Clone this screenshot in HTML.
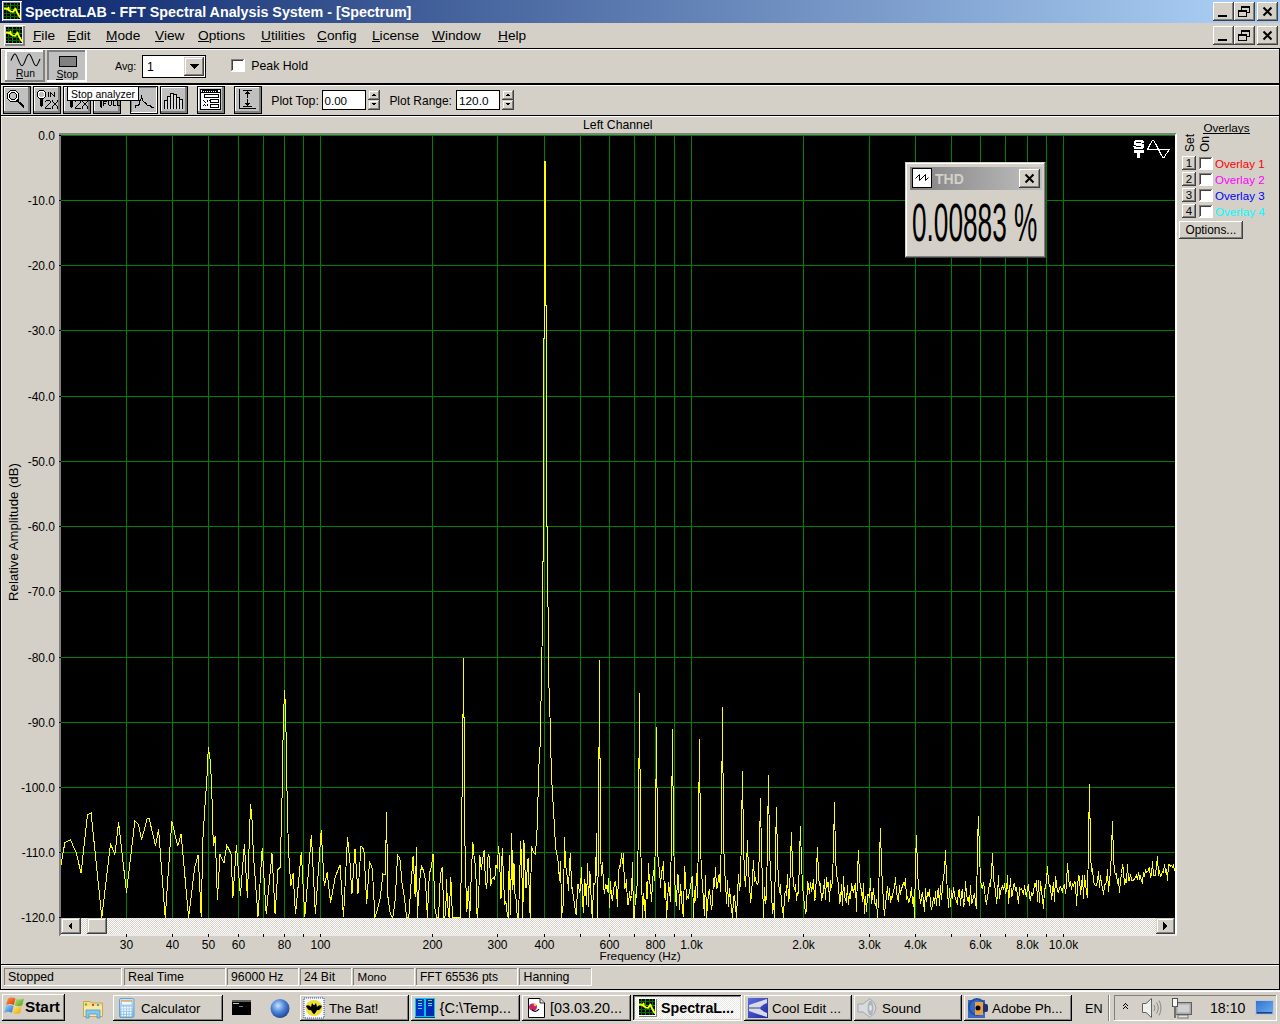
<!DOCTYPE html><html><head><meta charset="utf-8"><style>html,body{margin:0;padding:0;width:1280px;height:1024px;overflow:hidden;background:#D4D0C8}</style></head><body><svg width="1280" height="1024" viewBox="0 0 1280 1024" style="display:block">
<defs><linearGradient id="cap" gradientUnits="userSpaceOnUse" x1="0" x2="1212" y1="0" y2="0"><stop offset="0" stop-color="#0A246A"/><stop offset="1" stop-color="#A6CAF0"/></linearGradient><linearGradient id="icap" x1="0" x2="1" y1="0" y2="0"><stop offset="0" stop-color="#808080"/><stop offset="1" stop-color="#C0C0C0"/></linearGradient><pattern id="dither" width="2" height="2" patternUnits="userSpaceOnUse"><rect width="2" height="2" fill="#D4D0C8"/><rect width="1" height="1" fill="#FFFFFF"/><rect x="1" y="1" width="1" height="1" fill="#FFFFFF"/></pattern><pattern id="dither2" width="2" height="2" patternUnits="userSpaceOnUse"><rect width="2" height="2" fill="#FFFFFF"/><rect width="1" height="1" fill="#EAE8E3"/><rect x="1" y="1" width="1" height="1" fill="#EAE8E3"/></pattern></defs>
<clipPath id="plotclip"><rect x="61" y="135" width="1114" height="783"/></clipPath>
<g shape-rendering="crispEdges">
<rect x="0" y="0" width="1280" height="1024" fill="#D4D0C8" />
<rect x="0" y="0" width="1280" height="23" fill="url(#cap)" />
<rect x="2" y="1" width="20" height="20" fill="#FFFFFF" />
<rect x="3" y="2" width="19" height="19" fill="#808080" />
<rect x="3" y="2" width="18" height="18" fill="#FFFFFF" />
<rect x="3" y="2" width="17" height="17" fill="#808080" />
<rect x="4" y="3" width="16" height="16" fill="#000" />
<rect x="6" y="3" width="1" height="16" fill="#006A00" />
<rect x="4" y="5" width="16" height="1" fill="#006A00" />
<rect x="10" y="3" width="1" height="16" fill="#00A000" />
<rect x="4" y="9" width="16" height="1" fill="#00A000" />
<rect x="14" y="3" width="1" height="16" fill="#006A00" />
<rect x="4" y="13" width="16" height="1" fill="#006A00" />
<rect x="17" y="3" width="1" height="16" fill="#006A00" />
<rect x="4" y="16" width="16" height="1" fill="#006A00" />
<polyline points="4,8.5 6,8.5 7.5,9.5 8.5,7.5 9,10.5 11,11.5 13,12 15.5,8.5 16.5,11.5 18,14 20,17.5" fill="none" stroke="#FFFF00" stroke-width="1.8" stroke-linejoin="round" shape-rendering="auto"/>
<text x="25.0" y="17" font-family="Liberation Sans" font-size="14.3" font-weight="bold" fill="#FFFFFF" text-anchor="start" >SpectraLAB - FFT Spectral Analysis System - [Spectrum]</text>
<rect x="1213" y="2" width="21" height="19" fill="#D4D0C8" />
<rect x="1213" y="2" width="21" height="1" fill="#FFFFFF" />
<rect x="1213" y="2" width="1" height="19" fill="#FFFFFF" />
<rect x="1213" y="20" width="21" height="1" fill="#404040" />
<rect x="1233" y="2" width="1" height="19" fill="#404040" />
<rect x="1214" y="3" width="19" height="1" fill="#D4D0C8" />
<rect x="1214" y="3" width="1" height="17" fill="#D4D0C8" />
<rect x="1214" y="19" width="19" height="1" fill="#808080" />
<rect x="1232" y="3" width="1" height="17" fill="#808080" />
<rect x="1218" y="15" width="9" height="2" fill="#000" />
<rect x="1234" y="2" width="21" height="19" fill="#D4D0C8" />
<rect x="1234" y="2" width="21" height="1" fill="#FFFFFF" />
<rect x="1234" y="2" width="1" height="19" fill="#FFFFFF" />
<rect x="1234" y="20" width="21" height="1" fill="#404040" />
<rect x="1254" y="2" width="1" height="19" fill="#404040" />
<rect x="1235" y="3" width="19" height="1" fill="#D4D0C8" />
<rect x="1235" y="3" width="1" height="17" fill="#D4D0C8" />
<rect x="1235" y="19" width="19" height="1" fill="#808080" />
<rect x="1253" y="3" width="1" height="17" fill="#808080" />
<rect x="1241" y="6" width="9" height="2" fill="#000" />
<rect x="1241" y="6" width="1" height="4" fill="#000" />
<rect x="1249" y="6" width="1" height="7" fill="#000" />
<rect x="1246" y="12" width="4" height="1" fill="#000" />
<rect x="1238" y="10" width="9" height="2" fill="#000" />
<rect x="1238" y="10" width="1" height="7" fill="#000" />
<rect x="1246" y="10" width="1" height="7" fill="#000" />
<rect x="1238" y="16" width="9" height="1" fill="#000" />
<rect x="1257" y="2" width="21" height="19" fill="#D4D0C8" />
<rect x="1257" y="2" width="21" height="1" fill="#FFFFFF" />
<rect x="1257" y="2" width="1" height="19" fill="#FFFFFF" />
<rect x="1257" y="20" width="21" height="1" fill="#404040" />
<rect x="1277" y="2" width="1" height="19" fill="#404040" />
<rect x="1258" y="3" width="19" height="1" fill="#D4D0C8" />
<rect x="1258" y="3" width="1" height="17" fill="#D4D0C8" />
<rect x="1258" y="19" width="19" height="1" fill="#808080" />
<rect x="1276" y="3" width="1" height="17" fill="#808080" />
<path d="M1263.5 7.5 L1271.5 15.5 M1271.5 7.5 L1263.5 15.5" stroke="#000" stroke-width="2" fill="none" shape-rendering="auto"/>
<rect x="4" y="25" width="21" height="21" fill="#FFFFFF" />
<rect x="5" y="26" width="20" height="20" fill="#808080" />
<rect x="5" y="26" width="18" height="18" fill="#E8E8E8" />
<rect x="5" y="26" width="17" height="17" fill="#D4D0C8" />
<rect x="6" y="27" width="16" height="16" fill="#000" />
<rect x="8" y="27" width="1" height="16" fill="#006A00" />
<rect x="6" y="29" width="16" height="1" fill="#006A00" />
<rect x="12" y="27" width="1" height="16" fill="#00A000" />
<rect x="6" y="33" width="16" height="1" fill="#00A000" />
<rect x="16" y="27" width="1" height="16" fill="#006A00" />
<rect x="6" y="37" width="16" height="1" fill="#006A00" />
<rect x="19" y="27" width="1" height="16" fill="#006A00" />
<rect x="6" y="40" width="16" height="1" fill="#006A00" />
<polyline points="6,32.5 8,32.5 9.5,33.5 10.5,31.5 11,34.5 13,35.5 15,36 17.5,32.5 18.5,35.5 20,38 22,41.5" fill="none" stroke="#FFFF00" stroke-width="1.8" stroke-linejoin="round" shape-rendering="auto"/>
<text x="33" y="40" font-family="Liberation Sans" font-size="13.7" font-weight="normal" fill="#000" text-anchor="start" >File</text>
<rect x="33" y="41" width="8" height="1" fill="#000" />
<text x="67" y="40" font-family="Liberation Sans" font-size="13.7" font-weight="normal" fill="#000" text-anchor="start" >Edit</text>
<rect x="67" y="41" width="9" height="1" fill="#000" />
<text x="106" y="40" font-family="Liberation Sans" font-size="13.7" font-weight="normal" fill="#000" text-anchor="start" >Mode</text>
<rect x="106" y="41" width="11" height="1" fill="#000" />
<text x="155" y="40" font-family="Liberation Sans" font-size="13.7" font-weight="normal" fill="#000" text-anchor="start" >View</text>
<rect x="155" y="41" width="9" height="1" fill="#000" />
<text x="198" y="40" font-family="Liberation Sans" font-size="13.7" font-weight="normal" fill="#000" text-anchor="start" >Options</text>
<rect x="198" y="41" width="11" height="1" fill="#000" />
<text x="261" y="40" font-family="Liberation Sans" font-size="13.7" font-weight="normal" fill="#000" text-anchor="start" >Utilities</text>
<rect x="261" y="41" width="10" height="1" fill="#000" />
<text x="317" y="40" font-family="Liberation Sans" font-size="13.7" font-weight="normal" fill="#000" text-anchor="start" >Config</text>
<rect x="317" y="41" width="10" height="1" fill="#000" />
<text x="372" y="40" font-family="Liberation Sans" font-size="13.7" font-weight="normal" fill="#000" text-anchor="start" >License</text>
<rect x="372" y="41" width="8" height="1" fill="#000" />
<text x="432" y="40" font-family="Liberation Sans" font-size="13.7" font-weight="normal" fill="#000" text-anchor="start" >Window</text>
<rect x="432" y="41" width="13" height="1" fill="#000" />
<text x="498" y="40" font-family="Liberation Sans" font-size="13.7" font-weight="normal" fill="#000" text-anchor="start" >Help</text>
<rect x="498" y="41" width="10" height="1" fill="#000" />
<rect x="1213" y="26" width="21" height="19" fill="#D4D0C8" />
<rect x="1213" y="26" width="21" height="1" fill="#FFFFFF" />
<rect x="1213" y="26" width="1" height="19" fill="#FFFFFF" />
<rect x="1213" y="44" width="21" height="1" fill="#404040" />
<rect x="1233" y="26" width="1" height="19" fill="#404040" />
<rect x="1214" y="27" width="19" height="1" fill="#D4D0C8" />
<rect x="1214" y="27" width="1" height="17" fill="#D4D0C8" />
<rect x="1214" y="43" width="19" height="1" fill="#808080" />
<rect x="1232" y="27" width="1" height="17" fill="#808080" />
<rect x="1218" y="39" width="9" height="2" fill="#000" />
<rect x="1234" y="26" width="21" height="19" fill="#D4D0C8" />
<rect x="1234" y="26" width="21" height="1" fill="#FFFFFF" />
<rect x="1234" y="26" width="1" height="19" fill="#FFFFFF" />
<rect x="1234" y="44" width="21" height="1" fill="#404040" />
<rect x="1254" y="26" width="1" height="19" fill="#404040" />
<rect x="1235" y="27" width="19" height="1" fill="#D4D0C8" />
<rect x="1235" y="27" width="1" height="17" fill="#D4D0C8" />
<rect x="1235" y="43" width="19" height="1" fill="#808080" />
<rect x="1253" y="27" width="1" height="17" fill="#808080" />
<rect x="1241" y="30" width="9" height="2" fill="#000" />
<rect x="1241" y="30" width="1" height="4" fill="#000" />
<rect x="1249" y="30" width="1" height="7" fill="#000" />
<rect x="1246" y="36" width="4" height="1" fill="#000" />
<rect x="1238" y="34" width="9" height="2" fill="#000" />
<rect x="1238" y="34" width="1" height="7" fill="#000" />
<rect x="1246" y="34" width="1" height="7" fill="#000" />
<rect x="1238" y="40" width="9" height="1" fill="#000" />
<rect x="1257" y="26" width="21" height="19" fill="#D4D0C8" />
<rect x="1257" y="26" width="21" height="1" fill="#FFFFFF" />
<rect x="1257" y="26" width="1" height="19" fill="#FFFFFF" />
<rect x="1257" y="44" width="21" height="1" fill="#404040" />
<rect x="1277" y="26" width="1" height="19" fill="#404040" />
<rect x="1258" y="27" width="19" height="1" fill="#D4D0C8" />
<rect x="1258" y="27" width="1" height="17" fill="#D4D0C8" />
<rect x="1258" y="43" width="19" height="1" fill="#808080" />
<rect x="1276" y="27" width="1" height="17" fill="#808080" />
<path d="M1263.5 31.5 L1271.5 39.5 M1271.5 31.5 L1263.5 39.5" stroke="#000" stroke-width="2" fill="none" shape-rendering="auto"/>
<rect x="0" y="48" width="1" height="942" fill="#000" />
<rect x="1" y="49" width="1" height="940" fill="#EEEBE6" />
<rect x="1279" y="48" width="1" height="942" fill="#000" />
<rect x="0" y="48" width="1280" height="1" fill="#000" />
<rect x="1" y="49" width="1278" height="1" fill="#FFFFFF" />
<rect x="0" y="83" width="1280" height="1" fill="#000" />
<rect x="0" y="84" width="1280" height="1" fill="#000" />
<rect x="1" y="85" width="1278" height="1" fill="#FFFFFF" />
<rect x="0" y="115" width="1280" height="1" fill="#000" />
<rect x="1" y="116" width="1278" height="1" fill="#FFFFFF" />
<rect x="0" y="964" width="1280" height="1" fill="#000" />
<rect x="1" y="965" width="1278" height="1" fill="#FFFFFF" />
<rect x="0" y="989" width="1280" height="1" fill="#000" />
<rect x="5" y="50" width="40" height="32" fill="#C0C0C0" />
<rect x="5" y="50" width="40" height="2" fill="#FFFFFF" />
<rect x="5" y="50" width="2" height="32" fill="#FFFFFF" />
<rect x="5" y="80" width="40" height="2" fill="#808080" />
<rect x="43" y="50" width="2" height="32" fill="#808080" />
<path d="M11 60.5 C12.5 57 13.5 54 15 54 C17 54 19.5 65.8 22 65.8 C24.5 65.8 26.5 54 29 54 C31.5 54 33.5 65.8 36 65.8 C37.5 65.8 39 61 40 59" fill="none" stroke="#000" stroke-width="1.1" shape-rendering="auto"/>
<text x="16.0" y="77" font-family="Liberation Sans" font-size="10.35" font-weight="normal" fill="#000" text-anchor="start" >Run</text>
<rect x="16" y="78" width="7" height="1" fill="#000" />
<rect x="47" y="50" width="40" height="32" fill="#C0C0C0" />
<rect x="47" y="50" width="40" height="2" fill="#808080" />
<rect x="47" y="50" width="2" height="32" fill="#808080" />
<rect x="47" y="80" width="40" height="2" fill="#FFFFFF" />
<rect x="85" y="50" width="2" height="32" fill="#FFFFFF" />
<rect x="59" y="56" width="18" height="11" fill="#000" />
<rect x="60" y="57" width="16" height="9" fill="#808080" />
<text x="56.5" y="78" font-family="Liberation Sans" font-size="10.46" font-weight="normal" fill="#000" text-anchor="start" >Stop</text>
<rect x="56" y="79" width="7" height="1" fill="#000" />
<text x="115.0" y="70" font-family="Liberation Sans" font-size="10.78" font-weight="normal" fill="#000" text-anchor="start" >Avg:</text>
<rect x="142" y="55" width="64" height="23" fill="#000" />
<rect x="143" y="56" width="62" height="21" fill="#FFFFFF" />
<rect x="184" y="57" width="20" height="19" fill="#D4D0C8" />
<rect x="184" y="57" width="20" height="1" fill="#D4D0C8" />
<rect x="184" y="57" width="1" height="19" fill="#D4D0C8" />
<rect x="184" y="75" width="20" height="1" fill="#404040" />
<rect x="203" y="57" width="1" height="19" fill="#404040" />
<rect x="185" y="58" width="18" height="1" fill="#FFFFFF" />
<rect x="185" y="58" width="1" height="17" fill="#FFFFFF" />
<rect x="185" y="74" width="18" height="1" fill="#808080" />
<rect x="202" y="58" width="1" height="17" fill="#808080" />
<path d="M189 64 L199 64 L194 69 Z" fill="#000"/>
<text x="147" y="71" font-family="Liberation Sans" font-size="12.2" font-weight="normal" fill="#000" text-anchor="start" >1</text>
<rect x="231" y="59" width="14" height="13" fill="#FFFFFF" />
<rect x="231" y="59" width="14" height="1" fill="#808080" />
<rect x="231" y="59" width="1" height="13" fill="#808080" />
<rect x="231" y="71" width="14" height="1" fill="#FFFFFF" />
<rect x="244" y="59" width="1" height="13" fill="#FFFFFF" />
<rect x="232" y="60" width="12" height="1" fill="#404040" />
<rect x="232" y="60" width="1" height="11" fill="#404040" />
<rect x="232" y="70" width="12" height="1" fill="#FFFFFF" />
<rect x="243" y="60" width="1" height="11" fill="#FFFFFF" />
<text x="251.3" y="70" font-family="Liberation Sans" font-size="12.29" font-weight="normal" fill="#000" text-anchor="start" >Peak Hold</text>
<rect x="3" y="86" width="28" height="28" fill="#000" />
<rect x="4" y="87" width="26" height="26" fill="#C0C0C0" />
<rect x="4" y="87" width="26" height="1" fill="#FFFFFF" />
<rect x="4" y="87" width="1" height="26" fill="#FFFFFF" />
<rect x="4" y="111" width="26" height="2" fill="#808080" />
<rect x="28" y="87" width="2" height="26" fill="#808080" />
<rect x="33" y="86" width="28" height="28" fill="#000" />
<rect x="34" y="87" width="26" height="26" fill="#C0C0C0" />
<rect x="34" y="87" width="26" height="1" fill="#FFFFFF" />
<rect x="34" y="87" width="1" height="26" fill="#FFFFFF" />
<rect x="34" y="111" width="26" height="2" fill="#808080" />
<rect x="58" y="87" width="2" height="26" fill="#808080" />
<rect x="63" y="86" width="28" height="28" fill="#000" />
<rect x="64" y="87" width="26" height="26" fill="#C0C0C0" />
<rect x="64" y="87" width="26" height="1" fill="#FFFFFF" />
<rect x="64" y="87" width="1" height="26" fill="#FFFFFF" />
<rect x="64" y="111" width="26" height="2" fill="#808080" />
<rect x="88" y="87" width="2" height="26" fill="#808080" />
<rect x="93" y="86" width="28" height="28" fill="#000" />
<rect x="94" y="87" width="26" height="26" fill="#C0C0C0" />
<rect x="94" y="87" width="26" height="1" fill="#FFFFFF" />
<rect x="94" y="87" width="1" height="26" fill="#FFFFFF" />
<rect x="94" y="111" width="26" height="2" fill="#808080" />
<rect x="118" y="87" width="2" height="26" fill="#808080" />
<rect x="160" y="86" width="28" height="28" fill="#000" />
<rect x="161" y="87" width="26" height="26" fill="#C0C0C0" />
<rect x="161" y="87" width="26" height="1" fill="#FFFFFF" />
<rect x="161" y="87" width="1" height="26" fill="#FFFFFF" />
<rect x="161" y="111" width="26" height="2" fill="#808080" />
<rect x="185" y="87" width="2" height="26" fill="#808080" />
<rect x="197" y="86" width="28" height="28" fill="#000" />
<rect x="198" y="87" width="26" height="26" fill="#C0C0C0" />
<rect x="198" y="87" width="26" height="1" fill="#FFFFFF" />
<rect x="198" y="87" width="1" height="26" fill="#FFFFFF" />
<rect x="198" y="111" width="26" height="2" fill="#808080" />
<rect x="222" y="87" width="2" height="26" fill="#808080" />
<rect x="234" y="86" width="28" height="28" fill="#000" />
<rect x="235" y="87" width="26" height="26" fill="#C0C0C0" />
<rect x="235" y="87" width="26" height="1" fill="#FFFFFF" />
<rect x="235" y="87" width="1" height="26" fill="#FFFFFF" />
<rect x="235" y="111" width="26" height="2" fill="#808080" />
<rect x="259" y="87" width="2" height="26" fill="#808080" />
<rect x="130" y="86" width="28" height="28" fill="#000" />
<rect x="131" y="87" width="26" height="26" fill="#C0C0C0" />
<rect x="131" y="87" width="26" height="1" fill="#808080" />
<rect x="131" y="87" width="1" height="26" fill="#808080" />
<rect x="131" y="112" width="26" height="1" fill="#FFFFFF" />
<rect x="156" y="87" width="1" height="26" fill="#FFFFFF" />
<rect x="10" y="90" width="6" height="1" fill="#000" />
<rect x="9" y="91" width="1" height="1" fill="#000" />
<rect x="10" y="91" width="6" height="1" fill="#FFFFFF" />
<rect x="16" y="91" width="1" height="1" fill="#000" />
<rect x="8" y="92" width="1" height="1" fill="#000" />
<rect x="9" y="92" width="2" height="1" fill="#FFFFFF" />
<rect x="11" y="92" width="4" height="1" fill="#000" />
<rect x="15" y="92" width="2" height="1" fill="#FFFFFF" />
<rect x="17" y="92" width="1" height="1" fill="#000" />
<rect x="7" y="93" width="1" height="1" fill="#000" />
<rect x="8" y="93" width="2" height="1" fill="#FFFFFF" />
<rect x="10" y="93" width="1" height="1" fill="#000" />
<rect x="15" y="93" width="1" height="1" fill="#000" />
<rect x="16" y="93" width="2" height="1" fill="#FFFFFF" />
<rect x="18" y="93" width="1" height="1" fill="#000" />
<rect x="7" y="94" width="1" height="1" fill="#000" />
<rect x="8" y="94" width="1" height="1" fill="#FFFFFF" />
<rect x="9" y="94" width="1" height="1" fill="#000" />
<rect x="16" y="94" width="1" height="1" fill="#000" />
<rect x="17" y="94" width="1" height="1" fill="#FFFFFF" />
<rect x="18" y="94" width="1" height="1" fill="#000" />
<rect x="7" y="95" width="1" height="1" fill="#000" />
<rect x="8" y="95" width="1" height="1" fill="#FFFFFF" />
<rect x="9" y="95" width="1" height="1" fill="#000" />
<rect x="16" y="95" width="1" height="1" fill="#000" />
<rect x="17" y="95" width="1" height="1" fill="#FFFFFF" />
<rect x="18" y="95" width="1" height="1" fill="#000" />
<rect x="7" y="96" width="1" height="1" fill="#000" />
<rect x="8" y="96" width="1" height="1" fill="#FFFFFF" />
<rect x="9" y="96" width="1" height="1" fill="#000" />
<rect x="16" y="96" width="1" height="1" fill="#000" />
<rect x="17" y="96" width="1" height="1" fill="#FFFFFF" />
<rect x="18" y="96" width="1" height="1" fill="#000" />
<rect x="7" y="97" width="1" height="1" fill="#000" />
<rect x="8" y="97" width="1" height="1" fill="#FFFFFF" />
<rect x="9" y="97" width="1" height="1" fill="#000" />
<rect x="16" y="97" width="1" height="1" fill="#000" />
<rect x="17" y="97" width="1" height="1" fill="#FFFFFF" />
<rect x="18" y="97" width="1" height="1" fill="#000" />
<rect x="7" y="98" width="1" height="1" fill="#000" />
<rect x="8" y="98" width="2" height="1" fill="#FFFFFF" />
<rect x="10" y="98" width="1" height="1" fill="#000" />
<rect x="15" y="98" width="1" height="1" fill="#000" />
<rect x="16" y="98" width="2" height="1" fill="#FFFFFF" />
<rect x="18" y="98" width="1" height="1" fill="#000" />
<rect x="8" y="99" width="1" height="1" fill="#000" />
<rect x="9" y="99" width="2" height="1" fill="#FFFFFF" />
<rect x="11" y="99" width="4" height="1" fill="#000" />
<rect x="15" y="99" width="2" height="1" fill="#FFFFFF" />
<rect x="17" y="99" width="2" height="1" fill="#000" />
<rect x="9" y="100" width="1" height="1" fill="#000" />
<rect x="10" y="100" width="6" height="1" fill="#FFFFFF" />
<rect x="16" y="100" width="3" height="1" fill="#000" />
<rect x="10" y="101" width="9" height="1" fill="#000" />
<rect x="18" y="102" width="3" height="1" fill="#000" />
<rect x="19" y="103" width="3" height="1" fill="#000" />
<rect x="20" y="104" width="3" height="1" fill="#000" />
<rect x="21" y="105" width="3" height="1" fill="#000" />
<rect x="22" y="106" width="2" height="1" fill="#000" />
<rect x="23" y="107" width="1" height="1" fill="#000" />
<rect x="39" y="90" width="5" height="1" fill="#000" />
<rect x="38" y="91" width="1" height="1" fill="#000" />
<rect x="39" y="91" width="5" height="1" fill="#FFFFFF" />
<rect x="44" y="91" width="1" height="1" fill="#000" />
<rect x="37" y="92" width="1" height="1" fill="#000" />
<rect x="38" y="92" width="2" height="1" fill="#FFFFFF" />
<rect x="43" y="92" width="2" height="1" fill="#FFFFFF" />
<rect x="45" y="92" width="1" height="1" fill="#000" />
<rect x="37" y="93" width="1" height="1" fill="#000" />
<rect x="38" y="93" width="1" height="1" fill="#FFFFFF" />
<rect x="44" y="93" width="1" height="1" fill="#FFFFFF" />
<rect x="45" y="93" width="1" height="1" fill="#000" />
<rect x="37" y="94" width="1" height="1" fill="#000" />
<rect x="38" y="94" width="1" height="1" fill="#FFFFFF" />
<rect x="44" y="94" width="1" height="1" fill="#FFFFFF" />
<rect x="45" y="94" width="1" height="1" fill="#000" />
<rect x="37" y="95" width="1" height="1" fill="#000" />
<rect x="38" y="95" width="1" height="1" fill="#FFFFFF" />
<rect x="44" y="95" width="1" height="1" fill="#FFFFFF" />
<rect x="45" y="95" width="1" height="1" fill="#000" />
<rect x="37" y="96" width="1" height="1" fill="#000" />
<rect x="38" y="96" width="2" height="1" fill="#FFFFFF" />
<rect x="43" y="96" width="2" height="1" fill="#FFFFFF" />
<rect x="45" y="96" width="1" height="1" fill="#000" />
<rect x="38" y="97" width="1" height="1" fill="#000" />
<rect x="39" y="97" width="5" height="1" fill="#FFFFFF" />
<rect x="44" y="97" width="1" height="1" fill="#000" />
<rect x="39" y="98" width="5" height="1" fill="#000" />
<rect x="40" y="99" width="3" height="1" fill="#000" />
<rect x="40" y="100" width="3" height="1" fill="#000" />
<rect x="40" y="101" width="3" height="1" fill="#000" />
<rect x="40" y="102" width="3" height="1" fill="#000" />
<rect x="40" y="103" width="3" height="1" fill="#000" />
<rect x="40" y="104" width="3" height="1" fill="#000" />
<rect x="40" y="105" width="3" height="1" fill="#000" />
<rect x="41" y="106" width="1" height="1" fill="#000" />
<rect x="48" y="92" width="1" height="1" fill="#000" />
<rect x="50" y="92" width="1" height="1" fill="#000" />
<rect x="54" y="92" width="1" height="1" fill="#000" />
<rect x="48" y="93" width="1" height="1" fill="#000" />
<rect x="50" y="93" width="2" height="1" fill="#000" />
<rect x="54" y="93" width="1" height="1" fill="#000" />
<rect x="48" y="94" width="1" height="1" fill="#000" />
<rect x="50" y="94" width="1" height="1" fill="#000" />
<rect x="52" y="94" width="1" height="1" fill="#000" />
<rect x="54" y="94" width="1" height="1" fill="#000" />
<rect x="48" y="95" width="1" height="1" fill="#000" />
<rect x="50" y="95" width="1" height="1" fill="#000" />
<rect x="53" y="95" width="2" height="1" fill="#000" />
<rect x="48" y="96" width="1" height="1" fill="#000" />
<rect x="50" y="96" width="1" height="1" fill="#000" />
<rect x="54" y="96" width="1" height="1" fill="#000" />
<rect x="46" y="100" width="4" height="1" fill="#000" />
<rect x="52" y="100" width="1" height="1" fill="#000" />
<rect x="57" y="100" width="1" height="1" fill="#000" />
<rect x="45" y="101" width="1" height="1" fill="#000" />
<rect x="50" y="101" width="1" height="1" fill="#000" />
<rect x="52" y="101" width="1" height="1" fill="#000" />
<rect x="57" y="101" width="1" height="1" fill="#000" />
<rect x="50" y="102" width="1" height="1" fill="#000" />
<rect x="53" y="102" width="1" height="1" fill="#000" />
<rect x="56" y="102" width="1" height="1" fill="#000" />
<rect x="49" y="103" width="1" height="1" fill="#000" />
<rect x="54" y="103" width="2" height="1" fill="#000" />
<rect x="48" y="104" width="1" height="1" fill="#000" />
<rect x="54" y="104" width="2" height="1" fill="#000" />
<rect x="47" y="105" width="1" height="1" fill="#000" />
<rect x="53" y="105" width="1" height="1" fill="#000" />
<rect x="56" y="105" width="1" height="1" fill="#000" />
<rect x="46" y="106" width="1" height="1" fill="#000" />
<rect x="52" y="106" width="1" height="1" fill="#000" />
<rect x="57" y="106" width="1" height="1" fill="#000" />
<rect x="45" y="107" width="1" height="1" fill="#000" />
<rect x="52" y="107" width="1" height="1" fill="#000" />
<rect x="57" y="107" width="1" height="1" fill="#000" />
<rect x="45" y="108" width="6" height="1" fill="#000" />
<rect x="52" y="108" width="1" height="1" fill="#000" />
<rect x="57" y="108" width="1" height="1" fill="#000" />
<rect x="70" y="100" width="3" height="1" fill="#000" />
<rect x="70" y="101" width="3" height="1" fill="#000" />
<rect x="70" y="102" width="3" height="1" fill="#000" />
<rect x="70" y="103" width="3" height="1" fill="#000" />
<rect x="70" y="104" width="3" height="1" fill="#000" />
<rect x="70" y="105" width="3" height="1" fill="#000" />
<rect x="70" y="106" width="3" height="1" fill="#000" />
<rect x="71" y="107" width="1" height="1" fill="#000" />
<rect x="76" y="100" width="4" height="1" fill="#000" />
<rect x="82" y="100" width="1" height="1" fill="#000" />
<rect x="87" y="100" width="1" height="1" fill="#000" />
<rect x="75" y="101" width="1" height="1" fill="#000" />
<rect x="80" y="101" width="1" height="1" fill="#000" />
<rect x="82" y="101" width="1" height="1" fill="#000" />
<rect x="87" y="101" width="1" height="1" fill="#000" />
<rect x="80" y="102" width="1" height="1" fill="#000" />
<rect x="83" y="102" width="1" height="1" fill="#000" />
<rect x="86" y="102" width="1" height="1" fill="#000" />
<rect x="79" y="103" width="1" height="1" fill="#000" />
<rect x="84" y="103" width="2" height="1" fill="#000" />
<rect x="78" y="104" width="1" height="1" fill="#000" />
<rect x="84" y="104" width="2" height="1" fill="#000" />
<rect x="77" y="105" width="1" height="1" fill="#000" />
<rect x="83" y="105" width="1" height="1" fill="#000" />
<rect x="86" y="105" width="1" height="1" fill="#000" />
<rect x="76" y="106" width="1" height="1" fill="#000" />
<rect x="82" y="106" width="1" height="1" fill="#000" />
<rect x="87" y="106" width="1" height="1" fill="#000" />
<rect x="75" y="107" width="1" height="1" fill="#000" />
<rect x="82" y="107" width="1" height="1" fill="#000" />
<rect x="87" y="107" width="1" height="1" fill="#000" />
<rect x="75" y="108" width="6" height="1" fill="#000" />
<rect x="82" y="108" width="1" height="1" fill="#000" />
<rect x="87" y="108" width="1" height="1" fill="#000" />
<rect x="101" y="100" width="2" height="1" fill="#000" />
<rect x="100" y="101" width="2" height="1" fill="#000" />
<rect x="100" y="102" width="2" height="1" fill="#000" />
<rect x="100" y="103" width="2" height="1" fill="#000" />
<rect x="100" y="104" width="2" height="1" fill="#000" />
<rect x="100" y="105" width="2" height="1" fill="#000" />
<rect x="100" y="106" width="2" height="1" fill="#000" />
<rect x="101" y="107" width="1" height="1" fill="#000" />
<rect x="103" y="101" width="4" height="1" fill="#000" />
<rect x="108" y="101" width="1" height="1" fill="#000" />
<rect x="111" y="101" width="1" height="1" fill="#000" />
<rect x="113" y="101" width="1" height="1" fill="#000" />
<rect x="117" y="101" width="1" height="1" fill="#000" />
<rect x="103" y="102" width="1" height="1" fill="#000" />
<rect x="108" y="102" width="1" height="1" fill="#000" />
<rect x="111" y="102" width="1" height="1" fill="#000" />
<rect x="113" y="102" width="1" height="1" fill="#000" />
<rect x="117" y="102" width="1" height="1" fill="#000" />
<rect x="103" y="103" width="3" height="1" fill="#000" />
<rect x="108" y="103" width="1" height="1" fill="#000" />
<rect x="111" y="103" width="1" height="1" fill="#000" />
<rect x="113" y="103" width="1" height="1" fill="#000" />
<rect x="117" y="103" width="1" height="1" fill="#000" />
<rect x="103" y="104" width="1" height="1" fill="#000" />
<rect x="108" y="104" width="1" height="1" fill="#000" />
<rect x="111" y="104" width="1" height="1" fill="#000" />
<rect x="113" y="104" width="1" height="1" fill="#000" />
<rect x="117" y="104" width="1" height="1" fill="#000" />
<rect x="103" y="105" width="1" height="1" fill="#000" />
<rect x="109" y="105" width="2" height="1" fill="#000" />
<rect x="113" y="105" width="3" height="1" fill="#000" />
<rect x="117" y="105" width="3" height="1" fill="#000" />
<polyline points="135.5,107.5 135.5,105.5 138.5,105.5 139.5,103.5 139.5,101.5 140.5,99.5 141.5,98.5 141.5,94.5 141.5,98.5 142.5,98.5 142.5,100.5 144.5,102.5 145.5,102.5 146.5,104.5 147.5,105.5 150.5,105.5 151.5,107.5 153.5,107.5" fill="none" stroke="#000" stroke-width="1"/>
<rect x="164" y="100" width="4" height="1" fill="#000" />
<rect x="167" y="96" width="4" height="1" fill="#000" />
<rect x="170" y="93" width="4" height="1" fill="#000" />
<rect x="173" y="94" width="4" height="1" fill="#000" />
<rect x="176" y="97" width="4" height="1" fill="#000" />
<rect x="179" y="99" width="4" height="1" fill="#000" />
<rect x="164" y="100" width="1" height="9" fill="#000" />
<rect x="167" y="96" width="1" height="13" fill="#000" />
<rect x="170" y="93" width="1" height="16" fill="#000" />
<rect x="173" y="93" width="1" height="16" fill="#000" />
<rect x="176" y="94" width="1" height="15" fill="#000" />
<rect x="179" y="97" width="1" height="12" fill="#000" />
<rect x="182" y="99" width="1" height="10" fill="#000" />
<rect x="165" y="101" width="2" height="8" fill="#D8D8D8" />
<rect x="168" y="97" width="2" height="12" fill="#D8D8D8" />
<rect x="171" y="94" width="2" height="15" fill="#D8D8D8" />
<rect x="174" y="95" width="2" height="14" fill="#D8D8D8" />
<rect x="177" y="98" width="2" height="11" fill="#D8D8D8" />
<rect x="180" y="100" width="2" height="9" fill="#D8D8D8" />
<rect x="200" y="89" width="21" height="21" fill="#000" />
<rect x="201" y="93" width="19" height="16" fill="#FFFFFF" />
<rect x="203" y="91" width="1" height="1" fill="#FFFFFF" />
<rect x="205" y="91" width="1" height="1" fill="#FFFFFF" />
<rect x="207" y="91" width="1" height="1" fill="#FFFFFF" />
<rect x="209" y="91" width="1" height="1" fill="#FFFFFF" />
<rect x="211" y="91" width="1" height="1" fill="#FFFFFF" />
<rect x="213" y="91" width="1" height="1" fill="#FFFFFF" />
<rect x="215" y="91" width="1" height="1" fill="#FFFFFF" />
<rect x="218" y="90" width="2" height="2" fill="#FFFFFF" />
<rect x="201" y="90" width="1" height="2" fill="#FFFFFF" />
<rect x="204" y="94" width="15" height="4" fill="#000" />
<rect x="205" y="95" width="13" height="2" fill="#FFFFFF" />
<rect x="210" y="99" width="9" height="4" fill="#000" />
<rect x="211" y="100" width="7" height="2" fill="#FFFFFF" />
<rect x="210" y="104" width="9" height="4" fill="#000" />
<rect x="211" y="105" width="7" height="2" fill="#FFFFFF" />
<rect x="203" y="100" width="1" height="1" fill="#000" />
<rect x="207" y="100" width="1" height="1" fill="#000" />
<rect x="209" y="100" width="1" height="1" fill="#000" />
<rect x="204" y="101" width="1" height="1" fill="#000" />
<rect x="207" y="101" width="1" height="1" fill="#000" />
<rect x="205" y="102" width="1" height="1" fill="#000" />
<rect x="204" y="104" width="1" height="1" fill="#000" />
<rect x="207" y="104" width="1" height="1" fill="#000" />
<rect x="203" y="105" width="1" height="1" fill="#000" />
<rect x="205" y="105" width="1" height="1" fill="#000" />
<rect x="207" y="105" width="1" height="1" fill="#000" />
<rect x="239" y="89" width="1" height="20" fill="#000" />
<rect x="239" y="108" width="17" height="1" fill="#000" />
<rect x="243" y="90" width="9" height="1" fill="#000" />
<rect x="243" y="106" width="9" height="1" fill="#000" />
<rect x="247" y="91" width="1" height="7" fill="#000" />
<rect x="247" y="99" width="1" height="7" fill="#000" />
<rect x="246" y="92" width="3" height="1" fill="#000" />
<rect x="245" y="93" width="5" height="1" fill="#000" />
<rect x="245" y="103" width="5" height="1" fill="#000" />
<rect x="246" y="104" width="3" height="1" fill="#000" />
<text x="271.2" y="105" font-family="Liberation Sans" font-size="12.31" font-weight="normal" fill="#000" text-anchor="start" >Plot Top:</text>
<rect x="322" y="90" width="44" height="20" fill="#000" />
<rect x="323" y="91" width="42" height="18" fill="#FFFFFF" />
<text x="324.5" y="105" font-family="Liberation Sans" font-size="11.57" font-weight="normal" fill="#000" text-anchor="start" >0.00</text>
<rect x="368" y="90" width="12" height="10" fill="#D4D0C8" />
<rect x="368" y="90" width="12" height="1" fill="#D4D0C8" />
<rect x="368" y="90" width="1" height="10" fill="#D4D0C8" />
<rect x="368" y="99" width="12" height="1" fill="#404040" />
<rect x="379" y="90" width="1" height="10" fill="#404040" />
<rect x="369" y="91" width="10" height="1" fill="#FFFFFF" />
<rect x="369" y="91" width="1" height="8" fill="#FFFFFF" />
<rect x="369" y="98" width="10" height="1" fill="#808080" />
<rect x="378" y="91" width="1" height="8" fill="#808080" />
<rect x="368" y="100" width="12" height="10" fill="#D4D0C8" />
<rect x="368" y="100" width="12" height="1" fill="#D4D0C8" />
<rect x="368" y="100" width="1" height="10" fill="#D4D0C8" />
<rect x="368" y="109" width="12" height="1" fill="#404040" />
<rect x="379" y="100" width="1" height="10" fill="#404040" />
<rect x="369" y="101" width="10" height="1" fill="#FFFFFF" />
<rect x="369" y="101" width="1" height="8" fill="#FFFFFF" />
<rect x="369" y="108" width="10" height="1" fill="#808080" />
<rect x="378" y="101" width="1" height="8" fill="#808080" />
<path d="M372 96 L376 96 L374 93 Z" fill="#000"/>
<path d="M372 103 L376 103 L374 106 Z" fill="#000"/>
<text x="389.4" y="105" font-family="Liberation Sans" font-size="11.98" font-weight="normal" fill="#000" text-anchor="start" >Plot Range:</text>
<rect x="456" y="90" width="44" height="20" fill="#000" />
<rect x="457" y="91" width="42" height="18" fill="#FFFFFF" />
<text x="459.0" y="105" font-family="Liberation Sans" font-size="11.78" font-weight="normal" fill="#000" text-anchor="start" >120.0</text>
<rect x="502" y="90" width="12" height="10" fill="#D4D0C8" />
<rect x="502" y="90" width="12" height="1" fill="#D4D0C8" />
<rect x="502" y="90" width="1" height="10" fill="#D4D0C8" />
<rect x="502" y="99" width="12" height="1" fill="#404040" />
<rect x="513" y="90" width="1" height="10" fill="#404040" />
<rect x="503" y="91" width="10" height="1" fill="#FFFFFF" />
<rect x="503" y="91" width="1" height="8" fill="#FFFFFF" />
<rect x="503" y="98" width="10" height="1" fill="#808080" />
<rect x="512" y="91" width="1" height="8" fill="#808080" />
<rect x="502" y="100" width="12" height="10" fill="#D4D0C8" />
<rect x="502" y="100" width="12" height="1" fill="#D4D0C8" />
<rect x="502" y="100" width="1" height="10" fill="#D4D0C8" />
<rect x="502" y="109" width="12" height="1" fill="#404040" />
<rect x="513" y="100" width="1" height="10" fill="#404040" />
<rect x="503" y="101" width="10" height="1" fill="#FFFFFF" />
<rect x="503" y="101" width="1" height="8" fill="#FFFFFF" />
<rect x="503" y="108" width="10" height="1" fill="#808080" />
<rect x="512" y="101" width="1" height="8" fill="#808080" />
<path d="M506 96 L510 96 L508 93 Z" fill="#000"/>
<path d="M506 103 L510 103 L508 106 Z" fill="#000"/>
<rect x="59" y="133" width="1117" height="1" fill="#808080" />
<rect x="59" y="134" width="1116" height="1" fill="#808080" />
<rect x="59" y="133" width="2" height="803" fill="#808080" />
<rect x="1175" y="135" width="2" height="801" fill="#FFFFFF" />
<rect x="1176" y="134" width="1" height="1" fill="#FFFFFF" />
<rect x="61" y="934" width="1116" height="2" fill="#EAEAEA" />
<rect x="60" y="935" width="1" height="1" fill="#EAEAEA" />
<rect x="61" y="135" width="1114" height="783" fill="#000" />
<rect x="126" y="135" width="1" height="783" fill="#008000" />
<rect x="172" y="135" width="1" height="783" fill="#008000" />
<rect x="208" y="135" width="1" height="783" fill="#008000" />
<rect x="238" y="135" width="1" height="783" fill="#008000" />
<rect x="263" y="135" width="1" height="783" fill="#008000" />
<rect x="284" y="135" width="1" height="783" fill="#008000" />
<rect x="303" y="135" width="1" height="783" fill="#008000" />
<rect x="320" y="135" width="1" height="783" fill="#008000" />
<rect x="432" y="135" width="1" height="783" fill="#008000" />
<rect x="497" y="135" width="1" height="783" fill="#008000" />
<rect x="544" y="135" width="1" height="783" fill="#008000" />
<rect x="580" y="135" width="1" height="783" fill="#008000" />
<rect x="609" y="135" width="1" height="783" fill="#008000" />
<rect x="634" y="135" width="1" height="783" fill="#008000" />
<rect x="655" y="135" width="1" height="783" fill="#008000" />
<rect x="674" y="135" width="1" height="783" fill="#008000" />
<rect x="691" y="135" width="1" height="783" fill="#008000" />
<rect x="803" y="135" width="1" height="783" fill="#008000" />
<rect x="869" y="135" width="1" height="783" fill="#008000" />
<rect x="915" y="135" width="1" height="783" fill="#008000" />
<rect x="951" y="135" width="1" height="783" fill="#008000" />
<rect x="980" y="135" width="1" height="783" fill="#008000" />
<rect x="1005" y="135" width="1" height="783" fill="#008000" />
<rect x="1027" y="135" width="1" height="783" fill="#008000" />
<rect x="1046" y="135" width="1" height="783" fill="#008000" />
<rect x="1063" y="135" width="1" height="783" fill="#008000" />
<rect x="61" y="135" width="1114" height="1" fill="#008000" />
<rect x="59" y="135" width="2" height="1" fill="#000" />
<text x="55" y="140" font-family="Liberation Sans" font-size="12" font-weight="normal" fill="#000" text-anchor="end" >0.0</text>
<rect x="61" y="200" width="1114" height="1" fill="#008000" />
<rect x="59" y="200" width="2" height="1" fill="#000" />
<text x="55" y="205" font-family="Liberation Sans" font-size="12" font-weight="normal" fill="#000" text-anchor="end" >-10.0</text>
<rect x="61" y="265" width="1114" height="1" fill="#008000" />
<rect x="59" y="265" width="2" height="1" fill="#000" />
<text x="55" y="270" font-family="Liberation Sans" font-size="12" font-weight="normal" fill="#000" text-anchor="end" >-20.0</text>
<rect x="61" y="330" width="1114" height="1" fill="#008000" />
<rect x="59" y="330" width="2" height="1" fill="#000" />
<text x="55" y="335" font-family="Liberation Sans" font-size="12" font-weight="normal" fill="#000" text-anchor="end" >-30.0</text>
<rect x="61" y="396" width="1114" height="1" fill="#008000" />
<rect x="59" y="396" width="2" height="1" fill="#000" />
<text x="55" y="401" font-family="Liberation Sans" font-size="12" font-weight="normal" fill="#000" text-anchor="end" >-40.0</text>
<rect x="61" y="461" width="1114" height="1" fill="#008000" />
<rect x="59" y="461" width="2" height="1" fill="#000" />
<text x="55" y="466" font-family="Liberation Sans" font-size="12" font-weight="normal" fill="#000" text-anchor="end" >-50.0</text>
<rect x="61" y="526" width="1114" height="1" fill="#008000" />
<rect x="59" y="526" width="2" height="1" fill="#000" />
<text x="55" y="531" font-family="Liberation Sans" font-size="12" font-weight="normal" fill="#000" text-anchor="end" >-60.0</text>
<rect x="61" y="591" width="1114" height="1" fill="#008000" />
<rect x="59" y="591" width="2" height="1" fill="#000" />
<text x="55" y="596" font-family="Liberation Sans" font-size="12" font-weight="normal" fill="#000" text-anchor="end" >-70.0</text>
<rect x="61" y="657" width="1114" height="1" fill="#008000" />
<rect x="59" y="657" width="2" height="1" fill="#000" />
<text x="55" y="662" font-family="Liberation Sans" font-size="12" font-weight="normal" fill="#000" text-anchor="end" >-80.0</text>
<rect x="61" y="722" width="1114" height="1" fill="#008000" />
<rect x="59" y="722" width="2" height="1" fill="#000" />
<text x="55" y="727" font-family="Liberation Sans" font-size="12" font-weight="normal" fill="#000" text-anchor="end" >-90.0</text>
<rect x="61" y="787" width="1114" height="1" fill="#008000" />
<rect x="59" y="787" width="2" height="1" fill="#000" />
<text x="55" y="792" font-family="Liberation Sans" font-size="12" font-weight="normal" fill="#000" text-anchor="end" >-100.0</text>
<rect x="61" y="852" width="1114" height="1" fill="#008000" />
<rect x="59" y="852" width="2" height="1" fill="#000" />
<text x="55" y="857" font-family="Liberation Sans" font-size="12" font-weight="normal" fill="#000" text-anchor="end" >-110.0</text>
<rect x="59" y="917" width="2" height="1" fill="#000" />
<text x="55" y="922" font-family="Liberation Sans" font-size="12" font-weight="normal" fill="#000" text-anchor="end" >-120.0</text>
<rect x="61" y="918" width="1114" height="16" fill="url(#dither)" />
<rect x="61" y="918" width="20" height="16" fill="#D4D0C8" />
<rect x="61" y="918" width="20" height="1" fill="#D4D0C8" />
<rect x="61" y="918" width="1" height="16" fill="#D4D0C8" />
<rect x="61" y="933" width="20" height="1" fill="#404040" />
<rect x="80" y="918" width="1" height="16" fill="#404040" />
<rect x="62" y="919" width="18" height="1" fill="#FFFFFF" />
<rect x="62" y="919" width="1" height="14" fill="#FFFFFF" />
<rect x="62" y="932" width="18" height="1" fill="#808080" />
<rect x="79" y="919" width="1" height="14" fill="#808080" />
<path d="M68 926 L72 922 L72 930 Z" fill="#000"/>
<rect x="87" y="918" width="20" height="16" fill="#D4D0C8" />
<rect x="87" y="918" width="20" height="1" fill="#D4D0C8" />
<rect x="87" y="918" width="1" height="16" fill="#D4D0C8" />
<rect x="87" y="933" width="20" height="1" fill="#404040" />
<rect x="106" y="918" width="1" height="16" fill="#404040" />
<rect x="88" y="919" width="18" height="1" fill="#FFFFFF" />
<rect x="88" y="919" width="1" height="14" fill="#FFFFFF" />
<rect x="88" y="932" width="18" height="1" fill="#808080" />
<rect x="105" y="919" width="1" height="14" fill="#808080" />
<rect x="1156" y="918" width="19" height="16" fill="#D4D0C8" />
<rect x="1156" y="918" width="19" height="1" fill="#D4D0C8" />
<rect x="1156" y="918" width="1" height="16" fill="#D4D0C8" />
<rect x="1156" y="933" width="19" height="1" fill="#404040" />
<rect x="1174" y="918" width="1" height="16" fill="#404040" />
<rect x="1157" y="919" width="17" height="1" fill="#FFFFFF" />
<rect x="1157" y="919" width="1" height="14" fill="#FFFFFF" />
<rect x="1157" y="932" width="17" height="1" fill="#808080" />
<rect x="1173" y="919" width="1" height="14" fill="#808080" />
<path d="M1167 926 L1163 922 L1163 930 Z" fill="#000"/>
<rect x="126" y="934" width="1" height="3" fill="#000" />
<text x="126.5" y="949" font-family="Liberation Sans" font-size="12" font-weight="normal" fill="#000" text-anchor="middle" >30</text>
<rect x="172" y="934" width="1" height="3" fill="#000" />
<text x="172.5" y="949" font-family="Liberation Sans" font-size="12" font-weight="normal" fill="#000" text-anchor="middle" >40</text>
<rect x="208" y="934" width="1" height="3" fill="#000" />
<text x="208.5" y="949" font-family="Liberation Sans" font-size="12" font-weight="normal" fill="#000" text-anchor="middle" >50</text>
<rect x="238" y="934" width="1" height="3" fill="#000" />
<text x="238.5" y="949" font-family="Liberation Sans" font-size="12" font-weight="normal" fill="#000" text-anchor="middle" >60</text>
<rect x="263" y="934" width="1" height="3" fill="#000" />
<rect x="284" y="934" width="1" height="3" fill="#000" />
<text x="284.5" y="949" font-family="Liberation Sans" font-size="12" font-weight="normal" fill="#000" text-anchor="middle" >80</text>
<rect x="303" y="934" width="1" height="3" fill="#000" />
<rect x="320" y="934" width="1" height="3" fill="#000" />
<text x="320.5" y="949" font-family="Liberation Sans" font-size="12" font-weight="normal" fill="#000" text-anchor="middle" >100</text>
<rect x="432" y="934" width="1" height="3" fill="#000" />
<text x="432.5" y="949" font-family="Liberation Sans" font-size="12" font-weight="normal" fill="#000" text-anchor="middle" >200</text>
<rect x="497" y="934" width="1" height="3" fill="#000" />
<text x="497.5" y="949" font-family="Liberation Sans" font-size="12" font-weight="normal" fill="#000" text-anchor="middle" >300</text>
<rect x="544" y="934" width="1" height="3" fill="#000" />
<text x="544.5" y="949" font-family="Liberation Sans" font-size="12" font-weight="normal" fill="#000" text-anchor="middle" >400</text>
<rect x="580" y="934" width="1" height="3" fill="#000" />
<rect x="609" y="934" width="1" height="3" fill="#000" />
<text x="609.5" y="949" font-family="Liberation Sans" font-size="12" font-weight="normal" fill="#000" text-anchor="middle" >600</text>
<rect x="634" y="934" width="1" height="3" fill="#000" />
<rect x="655" y="934" width="1" height="3" fill="#000" />
<text x="655.5" y="949" font-family="Liberation Sans" font-size="12" font-weight="normal" fill="#000" text-anchor="middle" >800</text>
<rect x="674" y="934" width="1" height="3" fill="#000" />
<rect x="691" y="934" width="1" height="3" fill="#000" />
<text x="691.5" y="949" font-family="Liberation Sans" font-size="12" font-weight="normal" fill="#000" text-anchor="middle" >1.0k</text>
<rect x="803" y="934" width="1" height="3" fill="#000" />
<text x="803.5" y="949" font-family="Liberation Sans" font-size="12" font-weight="normal" fill="#000" text-anchor="middle" >2.0k</text>
<rect x="869" y="934" width="1" height="3" fill="#000" />
<text x="869.5" y="949" font-family="Liberation Sans" font-size="12" font-weight="normal" fill="#000" text-anchor="middle" >3.0k</text>
<rect x="915" y="934" width="1" height="3" fill="#000" />
<text x="915.5" y="949" font-family="Liberation Sans" font-size="12" font-weight="normal" fill="#000" text-anchor="middle" >4.0k</text>
<rect x="951" y="934" width="1" height="3" fill="#000" />
<rect x="980" y="934" width="1" height="3" fill="#000" />
<text x="980.5" y="949" font-family="Liberation Sans" font-size="12" font-weight="normal" fill="#000" text-anchor="middle" >6.0k</text>
<rect x="1005" y="934" width="1" height="3" fill="#000" />
<rect x="1027" y="934" width="1" height="3" fill="#000" />
<text x="1027.5" y="949" font-family="Liberation Sans" font-size="12" font-weight="normal" fill="#000" text-anchor="middle" >8.0k</text>
<rect x="1046" y="934" width="1" height="3" fill="#000" />
<rect x="1063" y="934" width="1" height="3" fill="#000" />
<text x="1063.5" y="949" font-family="Liberation Sans" font-size="12" font-weight="normal" fill="#000" text-anchor="middle" >10.0k</text>
<text x="599.5" y="960" font-family="Liberation Sans" font-size="11.77" font-weight="normal" fill="#000" text-anchor="start" >Frequency (Hz)</text>
<text x="583.0" y="129" font-family="Liberation Sans" font-size="12.26" font-weight="normal" fill="#000" text-anchor="start" >Left Channel</text>
<text x="18" y="532" font-family="Liberation Sans" font-size="13.2" font-weight="normal" fill="#000" text-anchor="middle" transform="rotate(-90 18 532)">Relative Amplitude (dB)</text>
</g>
<polyline points="60.5,867.5 64.9,842.5 70.5,840.0 76.1,852.5 81.1,873.0 87.4,815.0 91.1,813.0 101.8,917.5 110.5,843.8 114.9,854.4 118.6,822.5 126.5,892.5 134.9,820.6 138.6,824.4 141.5,840.0 147.4,818.0 149.0,818.0 155.5,845.6 158.6,829.4 165.2,917.5 171.8,821.2 177.8,846.2 181.1,833.8 188.6,917.5 194.7,867.5 198.2,854.6 201.2,916.7 202.9,839.4 205.2,801.9 206.9,778.4 208.3,747.5 209.9,757.3 211.6,783.1 212.7,825.3 213.4,846.4 215.3,835.8 217.4,900.3 220.0,854.6 224.0,862.8 226.8,845.2 231.0,853.4 232.9,898.0 236.4,845.2 240.4,895.6 244.4,844.0 247.4,898.0 250.5,804.2 252.1,820.6 253.3,853.4 258.0,916.7 262.2,847.6 266.2,914.4 272.0,853.4 275.1,914.4 277.9,869.8 280.2,867.5 281.9,804.2 283.0,740.9 284.4,689.8 285.6,708.1 286.3,748.0 287.5,820.6 288.9,855.8 290.8,886.2 293.1,873.3 295.5,914.4 301.3,852.3 304.8,916.7 311.4,834.7 315.4,914.4 321.2,830.0 324.3,886.2 327.1,872.2 330.6,902.6 335.3,876.9 340.0,865.1 343.5,916.7 347.5,837.0 350.0,862.8 351.9,894.4 355.0,848.9 358.0,893.8 361.0,845.9 363.9,849.5 366.7,903.5 369.5,861.5 372.3,868.5 375.0,917.5 377.7,908.6 380.3,897.6 382.9,873.9 385.4,874.8 386.5,811.7 387.9,896.7 390.4,914.5 392.8,917.5 395.2,900.1 397.6,855.3 399.9,858.5 402.2,884.9 404.4,897.4 406.6,917.5 408.8,917.5 411.0,884.6 413.1,855.8 415.2,897.1 416.5,847.5 417.3,917.5 419.4,883.7 421.4,866.1 423.4,870.4 425.4,879.3 427.4,917.5 429.3,873.9 431.2,867.4 433.1,853.7 434.9,908.1 436.8,917.5 438.6,917.5 440.4,874.0 442.2,867.4 444.0,917.5 445.7,915.3 446.5,879.5 447.4,902.4 449.1,917.5 450.8,877.5 452.5,917.5 454.1,917.5 455.8,917.5 457.4,917.5 459.0,917.5 460.6,917.5 462.2,781.6 463.7,658.5 464.5,809.7 465.3,866.0 466.8,912.3 468.3,885.7 469.8,917.5 471.3,873.8 472.8,841.7 474.2,857.7 475.7,867.9 477.1,917.5 478.5,903.5 479.9,855.4 481.3,869.5 482.7,858.7 484.1,850.4 485.5,882.2 486.8,888.9 488.1,854.3 489.5,856.5 490.8,885.5 492.1,878.5 493.4,877.7 494.7,879.3 496.0,865.3 497.2,868.9 498.5,846.1 499.7,862.8 501.0,898.9 502.2,848.2 503.4,874.2 504.6,904.8 505.8,900.8 507.0,911.6 508.2,917.5 509.3,854.9 510.5,914.6 511.7,833.5 512.8,890.4 514.0,863.1 515.1,895.9 516.2,899.4 517.3,917.5 518.4,917.5 519.5,885.3 520.6,840.9 521.7,862.4 522.8,917.5 523.9,840.3 524.9,867.3 526.0,888.2 527.0,872.6 528.1,857.9 529.1,887.1 530.2,917.5 531.5,846.5 533.5,852.5 535.5,854.5 537.3,825.5 538.7,770.0 540.2,743.5 541.1,696.5 542.5,620.5 542.5,561.5 543.5,561.5 543.5,338.5 544.5,338.5 544.5,161.5 545.5,161.5 545.5,305.5 546.5,305.5 546.5,526.5 547.5,526.5 548.1,620.5 549.0,687.9 550.5,731.9 551.3,772.9 553.4,808.0 555.7,849.1 557.8,857.9 559.5,880.5 560.7,860.8 561.5,917.5 562.5,909.7 563.5,902.4 564.5,836.8 565.5,863.1 566.5,872.2 567.5,877.2 568.5,891.4 569.5,863.0 570.5,853.4 571.5,888.1 572.5,888.0 573.5,899.9 574.5,902.4 575.5,913.7 576.5,914.3 577.5,884.8 578.5,884.9 579.5,892.6 580.5,889.6 581.5,866.9 582.5,900.5 583.5,913.4 584.5,879.2 585.5,886.5 586.5,904.7 587.5,863.3 588.5,906.6 589.5,871.1 590.5,877.5 591.5,910.7 592.5,917.5 593.5,883.2 594.5,884.0 595.5,881.7 596.5,833.0 597.5,917.5 598.5,841.1 599.5,660.5 600.5,852.6 601.5,875.5 602.5,861.8 603.5,885.4 604.5,894.0 605.5,884.8 606.5,885.1 607.5,891.8 608.5,878.5 609.5,908.3 610.5,881.3 611.5,897.7 612.5,900.5 613.5,890.8 614.5,884.1 615.5,880.7 616.5,891.7 617.5,907.0 618.5,872.2 619.5,865.6 620.5,866.0 621.5,853.1 622.5,863.9 623.5,853.0 624.5,889.2 625.5,887.1 626.5,879.5 627.5,904.9 628.5,904.8 629.5,891.4 630.5,900.7 631.5,895.5 632.5,861.8 633.5,917.5 634.5,917.5 635.5,894.3 636.5,897.7 637.5,874.9 638.5,826.8 639.5,693.5 640.5,841.9 641.5,872.1 642.5,917.5 643.5,893.2 644.5,904.6 645.5,917.5 646.5,882.4 647.5,898.5 648.5,863.0 649.5,883.1 650.5,885.6 651.5,901.8 652.5,881.9 653.5,869.6 654.5,880.9 655.5,833.7 656.5,727.5 657.5,847.3 658.5,866.0 659.5,867.4 660.5,888.1 661.5,870.7 662.5,869.9 663.5,861.5 664.5,898.4 665.5,882.8 666.5,917.5 667.5,903.2 668.5,882.4 669.5,890.9 670.5,901.5 671.5,824.4 672.5,729.5 673.5,840.3 674.5,872.1 675.5,897.1 676.5,905.7 677.5,874.6 678.5,876.4 679.5,909.6 680.5,884.5 681.5,897.0 682.5,911.2 683.5,917.1 684.5,866.5 685.5,877.5 686.5,899.5 687.5,896.6 688.5,897.9 689.5,890.1 690.5,888.2 691.5,878.8 692.5,876.0 693.5,917.5 694.5,889.7 695.5,900.7 696.5,872.6 697.5,897.5 698.5,828.8 699.5,739.5 700.5,843.8 701.5,873.9 702.5,883.1 703.5,902.6 704.5,915.5 705.5,875.0 706.5,917.5 707.5,905.9 708.5,892.2 709.5,890.4 710.5,899.9 711.5,909.9 712.5,901.6 713.5,878.2 714.5,887.4 715.5,867.5 716.5,888.3 717.5,887.9 718.5,877.2 719.5,873.8 720.5,891.5 721.5,818.6 722.5,707.5 723.5,836.1 724.5,871.1 725.5,880.2 726.5,903.6 727.5,880.0 728.5,907.3 729.5,887.6 730.5,900.8 731.5,907.7 732.5,917.5 733.5,898.2 734.5,895.0 735.5,906.5 736.5,917.5 737.5,894.9 738.5,874.4 739.5,891.1 740.5,882.7 741.5,829.7 742.5,771.5 743.5,844.6 744.5,874.5 745.5,887.0 746.5,865.4 747.5,840.5 748.5,872.0 749.5,882.0 750.5,903.2 751.5,894.5 752.5,878.2 753.5,860.5 754.5,881.7 755.5,878.6 756.5,882.6 757.5,884.4 758.5,880.8 759.5,844.2 760.5,798.5 761.5,855.8 762.5,878.9 763.5,917.5 764.5,886.8 765.5,904.0 766.5,896.7 767.5,838.2 768.5,775.5 769.5,851.2 770.5,871.0 771.5,890.5 772.5,914.4 773.5,902.8 774.5,917.5 775.5,848.5 776.5,807.5 777.5,859.1 778.5,880.3 779.5,893.2 780.5,883.7 781.5,905.3 782.5,908.5 783.5,917.5 784.5,894.9 785.5,890.7 786.5,895.9 787.5,873.8 788.5,901.9 789.5,896.0 790.5,861.2 791.5,832.5 792.5,868.9 793.5,884.1 794.5,889.6 795.5,884.2 796.5,900.5 797.5,892.5 798.5,893.7 799.5,857.0 800.5,826.5 801.5,865.6 802.5,883.0 803.5,898.4 804.5,903.9 805.5,914.2 806.5,909.6 807.5,880.8 808.5,885.2 809.5,894.1 810.5,881.7 811.5,891.6 812.5,886.1 813.5,879.5 814.5,900.7 815.5,898.5 816.5,869.8 817.5,847.5 818.5,875.5 819.5,885.7 820.5,883.3 821.5,901.3 822.5,893.9 823.5,892.8 824.5,878.6 825.5,899.7 826.5,877.4 827.5,886.5 828.5,882.1 829.5,901.5 830.5,880.5 831.5,887.6 832.5,881.1 833.5,846.8 834.5,802.5 835.5,858.0 836.5,874.1 837.5,880.4 838.5,883.9 839.5,903.9 840.5,899.9 841.5,884.4 842.5,906.3 843.5,876.3 844.5,897.0 845.5,899.5 846.5,901.6 847.5,885.4 848.5,905.0 849.5,892.7 850.5,898.7 851.5,883.5 852.5,888.5 853.5,893.3 854.5,885.9 855.5,883.4 856.5,911.8 857.5,872.4 858.5,850.5 859.5,877.6 860.5,887.9 861.5,888.7 862.5,902.1 863.5,883.1 864.5,913.8 865.5,896.0 866.5,912.3 867.5,894.5 868.5,894.7 869.5,897.9 870.5,878.4 871.5,903.8 872.5,896.6 873.5,888.2 874.5,900.7 875.5,906.1 876.5,899.5 877.5,917.5 878.5,899.8 879.5,857.3 880.5,828.5 881.5,866.3 882.5,884.4 883.5,903.2 884.5,916.2 885.5,902.7 886.5,897.1 887.5,886.0 888.5,899.8 889.5,887.6 890.5,903.4 891.5,896.5 892.5,897.0 893.5,889.4 894.5,888.9 895.5,877.4 896.5,893.3 897.5,896.9 898.5,902.4 899.5,884.9 900.5,895.2 901.5,887.9 902.5,886.9 903.5,882.3 904.5,885.7 905.5,878.5 906.5,899.5 907.5,896.4 908.5,902.0 909.5,901.6 910.5,894.5 911.5,887.3 912.5,903.5 913.5,896.6 914.5,917.5 915.5,861.9 916.5,835.5 917.5,870.4 918.5,887.5 919.5,893.0 920.5,904.1 921.5,897.5 922.5,891.6 923.5,903.0 924.5,911.8 925.5,888.3 926.5,902.3 927.5,892.2 928.5,895.5 929.5,889.5 930.5,904.7 931.5,910.0 932.5,905.1 933.5,897.0 934.5,904.4 935.5,891.4 936.5,906.4 937.5,890.8 938.5,889.0 939.5,906.3 940.5,884.7 941.5,899.9 942.5,886.3 943.5,875.6 944.5,872.9 945.5,850.5 946.5,878.7 947.5,889.8 948.5,907.6 949.5,888.5 950.5,907.3 951.5,890.4 952.5,899.1 953.5,886.7 954.5,894.6 955.5,898.7 956.5,901.4 957.5,904.7 958.5,890.7 959.5,889.5 960.5,906.1 961.5,892.9 962.5,889.0 963.5,907.2 964.5,902.5 965.5,881.1 966.5,894.8 967.5,899.7 968.5,898.0 969.5,906.4 970.5,885.1 971.5,903.5 972.5,902.2 973.5,896.7 974.5,894.6 975.5,901.9 976.5,909.2 977.5,842.7 978.5,816.5 979.5,854.9 980.5,879.3 981.5,887.0 982.5,888.3 983.5,881.8 984.5,889.1 985.5,899.7 986.5,904.7 987.5,896.5 988.5,892.1 989.5,882.9 990.5,887.0 991.5,872.2 992.5,853.5 993.5,877.2 994.5,887.0 995.5,889.0 996.5,904.3 997.5,894.1 998.5,875.3 999.5,898.8 1000.5,891.4 1001.5,888.8 1002.5,885.2 1003.5,889.9 1004.5,883.5 1005.5,893.0 1006.5,891.2 1007.5,875.0 1008.5,903.8 1009.5,892.3 1010.5,878.1 1011.5,896.1 1012.5,895.2 1013.5,885.0 1014.5,883.6 1015.5,890.8 1016.5,887.6 1017.5,895.9 1018.5,903.5 1019.5,888.0 1020.5,889.7 1021.5,889.0 1022.5,891.5 1023.5,894.5 1024.5,885.5 1025.5,892.0 1026.5,897.0 1027.5,887.1 1028.5,885.2 1029.5,897.1 1030.5,901.0 1031.5,891.9 1032.5,894.8 1033.5,893.2 1034.5,883.0 1035.5,886.4 1036.5,879.7 1037.5,902.0 1038.5,880.2 1039.5,902.5 1040.5,881.4 1041.5,890.3 1042.5,898.8 1043.5,909.2 1044.5,888.5 1045.5,888.8 1046.5,880.1 1047.5,866.5 1048.5,882.2 1049.5,886.4 1050.5,885.4 1051.5,900.4 1052.5,891.6 1053.5,881.6 1054.5,901.5 1055.5,876.1 1056.5,884.3 1057.5,890.9 1058.5,891.9 1059.5,887.9 1060.5,886.6 1061.5,890.1 1062.5,891.7 1063.5,885.4 1064.5,884.9 1065.5,893.6 1066.5,883.9 1067.5,862.9 1068.5,876.8 1069.5,887.1 1070.5,881.3 1071.5,889.8 1072.5,883.2 1073.5,885.9 1074.5,881.5 1075.5,882.2 1076.5,905.9 1077.5,886.9 1078.5,876.0 1079.5,876.5 1080.5,894.6 1081.5,884.9 1082.5,875.3 1083.5,899.0 1084.5,875.5 1085.5,884.5 1086.5,890.7 1087.5,898.4 1088.5,842.1 1089.5,784.5 1090.5,852.2 1091.5,872.4 1092.5,867.7 1093.5,882.5 1094.5,884.0 1095.5,885.8 1096.5,885.5 1097.5,880.1 1098.5,871.5 1099.5,887.8 1100.5,874.8 1101.5,884.0 1102.5,887.3 1103.5,894.9 1104.5,885.6 1105.5,883.3 1106.5,882.9 1107.5,869.3 1108.5,892.1 1109.5,879.8 1110.5,872.3 1111.5,850.0 1112.5,821.5 1113.5,857.3 1114.5,871.8 1115.5,874.5 1116.5,873.5 1117.5,884.0 1118.5,878.2 1119.5,892.7 1120.5,879.9 1121.5,873.5 1122.5,864.3 1123.5,870.0 1124.5,885.3 1125.5,880.5 1126.5,882.3 1127.5,864.4 1128.5,880.0 1129.5,880.6 1130.5,874.2 1131.5,880.5 1132.5,880.8 1133.5,880.0 1134.5,879.6 1135.5,876.6 1136.5,875.2 1137.5,879.5 1138.5,872.3 1139.5,878.5 1140.5,876.5 1141.5,881.6 1142.5,882.8 1143.5,872.2 1144.5,875.1 1145.5,870.3 1146.5,872.1 1147.5,871.8 1148.5,870.1 1149.5,866.7 1150.5,878.4 1151.5,873.8 1152.5,861.4 1153.5,875.4 1154.5,875.7 1155.5,874.9 1156.5,866.1 1157.5,856.2 1158.5,876.0 1159.5,869.7 1160.5,877.1 1161.5,874.2 1162.5,872.0 1163.5,872.1 1164.5,863.6 1165.5,873.0 1166.5,868.7 1167.5,880.6 1168.5,864.3 1169.5,864.2 1170.5,866.7 1171.5,865.7 1172.5,866.8 1173.5,864.7 1174.5,871.5" fill="none" stroke="#FFFF00" stroke-width="1" shape-rendering="crispEdges" clip-path="url(#plotclip)"/>
<g shape-rendering="crispEdges">
<rect x="1135" y="140" width="8" height="1" fill="#FFFFFF" />
<rect x="1134" y="141" width="10" height="1" fill="#FFFFFF" />
<rect x="1134" y="142" width="2" height="1" fill="#FFFFFF" />
<rect x="1141" y="142" width="3" height="1" fill="#FFFFFF" />
<rect x="1134" y="143" width="8" height="1" fill="#FFFFFF" />
<rect x="1134" y="144" width="10" height="1" fill="#FFFFFF" />
<rect x="1136" y="145" width="8" height="1" fill="#FFFFFF" />
<rect x="1133" y="146" width="3" height="1" fill="#FFFFFF" />
<rect x="1141" y="146" width="3" height="1" fill="#FFFFFF" />
<rect x="1134" y="147" width="10" height="1" fill="#FFFFFF" />
<rect x="1134" y="148" width="9" height="1" fill="#FFFFFF" />
<rect x="1134" y="150" width="10" height="1" fill="#FFFFFF" />
<rect x="1134" y="151" width="10" height="1" fill="#FFFFFF" />
<rect x="1134" y="152" width="10" height="1" fill="#FFFFFF" />
<rect x="1137" y="153" width="3" height="1" fill="#FFFFFF" />
<rect x="1137" y="154" width="3" height="1" fill="#FFFFFF" />
<rect x="1137" y="155" width="3" height="1" fill="#FFFFFF" />
<rect x="1137" y="156" width="3" height="1" fill="#FFFFFF" />
<rect x="1137" y="157" width="3" height="1" fill="#FFFFFF" />
<rect x="1147" y="149" width="23" height="1" fill="#FFFFFF" />
<path d="M1147.5 149.5 L1150.5 143.5 L1152.5 140.5 L1153.5 140.5 L1156 144.5 L1158.5 149.5 L1161 154.5 L1163 157.5 L1164 157.5 L1166.5 153.5 L1169.5 149.5" fill="none" stroke="#FFFFFF" stroke-width="1"/>
<rect x="905" y="162" width="141" height="96" fill="#D4D0C8" />
<rect x="905" y="162" width="141" height="1" fill="#D4D0C8" />
<rect x="905" y="162" width="1" height="96" fill="#D4D0C8" />
<rect x="905" y="257" width="141" height="1" fill="#404040" />
<rect x="1045" y="162" width="1" height="96" fill="#404040" />
<rect x="906" y="163" width="139" height="1" fill="#FFFFFF" />
<rect x="906" y="163" width="1" height="94" fill="#FFFFFF" />
<rect x="906" y="256" width="139" height="1" fill="#808080" />
<rect x="1044" y="163" width="1" height="94" fill="#808080" />
<rect x="910" y="167" width="132" height="23" fill="url(#icap)" />
<rect x="912" y="168" width="20" height="20" fill="#000" />
<rect x="913" y="169" width="18" height="18" fill="#FFFFFF" />
<polyline points="915.5,178.5 919.5,174.5 919.5,180.5 925.5,174.5 925.5,180.5 928.5,177.5" fill="none" stroke="#000" stroke-width="1" shape-rendering="auto"/>
<text x="935" y="184" font-family="Liberation Sans" font-size="14" font-weight="bold" fill="#D4D0C8" text-anchor="start" >THD</text>
<rect x="1019" y="169" width="21" height="19" fill="#D4D0C8" />
<rect x="1019" y="169" width="21" height="1" fill="#FFFFFF" />
<rect x="1019" y="169" width="1" height="19" fill="#FFFFFF" />
<rect x="1019" y="187" width="21" height="1" fill="#404040" />
<rect x="1039" y="169" width="1" height="19" fill="#404040" />
<rect x="1020" y="170" width="19" height="1" fill="#D4D0C8" />
<rect x="1020" y="170" width="1" height="17" fill="#D4D0C8" />
<rect x="1020" y="186" width="19" height="1" fill="#808080" />
<rect x="1038" y="170" width="1" height="17" fill="#808080" />
<path d="M1025.5 174.5 L1033.5 182.5 M1033.5 174.5 L1025.5 182.5" stroke="#000" stroke-width="2" fill="none" shape-rendering="auto"/>
<text x="912" y="241" font-family="Liberation Sans" font-size="53" fill="#000" transform="translate(912 0) scale(0.6 1) translate(-912 0)" textLength="209" lengthAdjust="spacingAndGlyphs">0.00883 %</text>
<text x="1203.4" y="132" font-family="Liberation Sans" font-size="11.69" font-weight="normal" fill="#000" text-anchor="start" >Overlays</text>
<rect x="1203" y="133" width="47" height="1" fill="#000" />
<text x="1194" y="152" font-family="Liberation Sans" font-size="12" font-weight="normal" fill="#000" text-anchor="start" transform="rotate(-90 1194 152)">Set</text>
<text x="1209" y="152" font-family="Liberation Sans" font-size="12" font-weight="normal" fill="#000" text-anchor="start" transform="rotate(-90 1209 152)">On</text>
<rect x="1182" y="156" width="14" height="14" fill="#D4D0C8" />
<rect x="1182" y="156" width="14" height="1" fill="#FFFFFF" />
<rect x="1182" y="156" width="1" height="14" fill="#FFFFFF" />
<rect x="1182" y="169" width="14" height="1" fill="#404040" />
<rect x="1195" y="156" width="1" height="14" fill="#404040" />
<rect x="1183" y="157" width="12" height="1" fill="#D4D0C8" />
<rect x="1183" y="157" width="1" height="12" fill="#D4D0C8" />
<rect x="1183" y="168" width="12" height="1" fill="#808080" />
<rect x="1194" y="157" width="1" height="12" fill="#808080" />
<text x="1189" y="167" font-family="Liberation Sans" font-size="11.5" font-weight="normal" fill="#000" text-anchor="middle" >1</text>
<rect x="1199" y="157" width="14" height="13" fill="#FFFFFF" />
<rect x="1199" y="157" width="14" height="1" fill="#808080" />
<rect x="1199" y="157" width="1" height="13" fill="#808080" />
<rect x="1199" y="169" width="14" height="1" fill="#FFFFFF" />
<rect x="1212" y="157" width="1" height="13" fill="#FFFFFF" />
<rect x="1200" y="158" width="12" height="1" fill="#404040" />
<rect x="1200" y="158" width="1" height="11" fill="#404040" />
<rect x="1200" y="168" width="12" height="1" fill="#FFFFFF" />
<rect x="1211" y="158" width="1" height="11" fill="#FFFFFF" />
<text x="1215" y="168" font-family="Liberation Sans" font-size="11.6" font-weight="normal" fill="#FF0000" text-anchor="start" >Overlay 1</text>
<rect x="1182" y="172" width="14" height="14" fill="#D4D0C8" />
<rect x="1182" y="172" width="14" height="1" fill="#FFFFFF" />
<rect x="1182" y="172" width="1" height="14" fill="#FFFFFF" />
<rect x="1182" y="185" width="14" height="1" fill="#404040" />
<rect x="1195" y="172" width="1" height="14" fill="#404040" />
<rect x="1183" y="173" width="12" height="1" fill="#D4D0C8" />
<rect x="1183" y="173" width="1" height="12" fill="#D4D0C8" />
<rect x="1183" y="184" width="12" height="1" fill="#808080" />
<rect x="1194" y="173" width="1" height="12" fill="#808080" />
<text x="1189" y="183" font-family="Liberation Sans" font-size="11.5" font-weight="normal" fill="#000" text-anchor="middle" >2</text>
<rect x="1199" y="173" width="14" height="13" fill="#FFFFFF" />
<rect x="1199" y="173" width="14" height="1" fill="#808080" />
<rect x="1199" y="173" width="1" height="13" fill="#808080" />
<rect x="1199" y="185" width="14" height="1" fill="#FFFFFF" />
<rect x="1212" y="173" width="1" height="13" fill="#FFFFFF" />
<rect x="1200" y="174" width="12" height="1" fill="#404040" />
<rect x="1200" y="174" width="1" height="11" fill="#404040" />
<rect x="1200" y="184" width="12" height="1" fill="#FFFFFF" />
<rect x="1211" y="174" width="1" height="11" fill="#FFFFFF" />
<text x="1215" y="184" font-family="Liberation Sans" font-size="11.6" font-weight="normal" fill="#FF00FF" text-anchor="start" >Overlay 2</text>
<rect x="1182" y="188" width="14" height="14" fill="#D4D0C8" />
<rect x="1182" y="188" width="14" height="1" fill="#FFFFFF" />
<rect x="1182" y="188" width="1" height="14" fill="#FFFFFF" />
<rect x="1182" y="201" width="14" height="1" fill="#404040" />
<rect x="1195" y="188" width="1" height="14" fill="#404040" />
<rect x="1183" y="189" width="12" height="1" fill="#D4D0C8" />
<rect x="1183" y="189" width="1" height="12" fill="#D4D0C8" />
<rect x="1183" y="200" width="12" height="1" fill="#808080" />
<rect x="1194" y="189" width="1" height="12" fill="#808080" />
<text x="1189" y="199" font-family="Liberation Sans" font-size="11.5" font-weight="normal" fill="#000" text-anchor="middle" >3</text>
<rect x="1199" y="189" width="14" height="13" fill="#FFFFFF" />
<rect x="1199" y="189" width="14" height="1" fill="#808080" />
<rect x="1199" y="189" width="1" height="13" fill="#808080" />
<rect x="1199" y="201" width="14" height="1" fill="#FFFFFF" />
<rect x="1212" y="189" width="1" height="13" fill="#FFFFFF" />
<rect x="1200" y="190" width="12" height="1" fill="#404040" />
<rect x="1200" y="190" width="1" height="11" fill="#404040" />
<rect x="1200" y="200" width="12" height="1" fill="#FFFFFF" />
<rect x="1211" y="190" width="1" height="11" fill="#FFFFFF" />
<text x="1215" y="200" font-family="Liberation Sans" font-size="11.6" font-weight="normal" fill="#0000FF" text-anchor="start" >Overlay 3</text>
<rect x="1182" y="204" width="14" height="14" fill="#D4D0C8" />
<rect x="1182" y="204" width="14" height="1" fill="#FFFFFF" />
<rect x="1182" y="204" width="1" height="14" fill="#FFFFFF" />
<rect x="1182" y="217" width="14" height="1" fill="#404040" />
<rect x="1195" y="204" width="1" height="14" fill="#404040" />
<rect x="1183" y="205" width="12" height="1" fill="#D4D0C8" />
<rect x="1183" y="205" width="1" height="12" fill="#D4D0C8" />
<rect x="1183" y="216" width="12" height="1" fill="#808080" />
<rect x="1194" y="205" width="1" height="12" fill="#808080" />
<text x="1189" y="215" font-family="Liberation Sans" font-size="11.5" font-weight="normal" fill="#000" text-anchor="middle" >4</text>
<rect x="1199" y="205" width="14" height="13" fill="#FFFFFF" />
<rect x="1199" y="205" width="14" height="1" fill="#808080" />
<rect x="1199" y="205" width="1" height="13" fill="#808080" />
<rect x="1199" y="217" width="14" height="1" fill="#FFFFFF" />
<rect x="1212" y="205" width="1" height="13" fill="#FFFFFF" />
<rect x="1200" y="206" width="12" height="1" fill="#404040" />
<rect x="1200" y="206" width="1" height="11" fill="#404040" />
<rect x="1200" y="216" width="12" height="1" fill="#FFFFFF" />
<rect x="1211" y="206" width="1" height="11" fill="#FFFFFF" />
<text x="1215" y="216" font-family="Liberation Sans" font-size="11.6" font-weight="normal" fill="#00FFFF" text-anchor="start" >Overlay 4</text>
<rect x="1179" y="221" width="64" height="18" fill="#D4D0C8" />
<rect x="1179" y="221" width="64" height="1" fill="#FFFFFF" />
<rect x="1179" y="221" width="1" height="18" fill="#FFFFFF" />
<rect x="1179" y="238" width="64" height="1" fill="#404040" />
<rect x="1242" y="221" width="1" height="18" fill="#404040" />
<rect x="1180" y="222" width="62" height="1" fill="#D4D0C8" />
<rect x="1180" y="222" width="1" height="16" fill="#D4D0C8" />
<rect x="1180" y="237" width="62" height="1" fill="#808080" />
<rect x="1241" y="222" width="1" height="16" fill="#808080" />
<text x="1185.5" y="234" font-family="Liberation Sans" font-size="11.87" font-weight="normal" fill="#000" text-anchor="start" >Options...</text>
<rect x="4" y="968" width="118" height="1" fill="#808080" />
<rect x="4" y="968" width="1" height="18" fill="#808080" />
<rect x="4" y="985" width="118" height="1" fill="#FFFFFF" />
<rect x="121" y="968" width="1" height="18" fill="#FFFFFF" />
<text x="8.0" y="981" font-family="Liberation Sans" font-size="12.35" font-weight="normal" fill="#000" text-anchor="start" >Stopped</text>
<rect x="124" y="968" width="102" height="1" fill="#808080" />
<rect x="124" y="968" width="1" height="18" fill="#808080" />
<rect x="124" y="985" width="102" height="1" fill="#FFFFFF" />
<rect x="225" y="968" width="1" height="18" fill="#FFFFFF" />
<text x="128.0" y="981" font-family="Liberation Sans" font-size="12.44" font-weight="normal" fill="#000" text-anchor="start" >Real Time</text>
<rect x="227" y="968" width="72" height="1" fill="#808080" />
<rect x="227" y="968" width="1" height="18" fill="#808080" />
<rect x="227" y="985" width="72" height="1" fill="#FFFFFF" />
<rect x="298" y="968" width="1" height="18" fill="#FFFFFF" />
<text x="231.0" y="981" font-family="Liberation Sans" font-size="12.27" font-weight="normal" fill="#000" text-anchor="start" >96000 Hz</text>
<rect x="300" y="968" width="52" height="1" fill="#808080" />
<rect x="300" y="968" width="1" height="18" fill="#808080" />
<rect x="300" y="985" width="52" height="1" fill="#FFFFFF" />
<rect x="351" y="968" width="1" height="18" fill="#FFFFFF" />
<text x="304.0" y="981" font-family="Liberation Sans" font-size="12.13" font-weight="normal" fill="#000" text-anchor="start" >24 Bit</text>
<rect x="353" y="968" width="62" height="1" fill="#808080" />
<rect x="353" y="968" width="1" height="18" fill="#808080" />
<rect x="353" y="985" width="62" height="1" fill="#FFFFFF" />
<rect x="414" y="968" width="1" height="18" fill="#FFFFFF" />
<text x="357.5" y="981" font-family="Liberation Sans" font-size="11.6" font-weight="normal" fill="#000" text-anchor="start" >Mono</text>
<rect x="416" y="968" width="102" height="1" fill="#808080" />
<rect x="416" y="968" width="1" height="18" fill="#808080" />
<rect x="416" y="985" width="102" height="1" fill="#FFFFFF" />
<rect x="517" y="968" width="1" height="18" fill="#FFFFFF" />
<text x="420.0" y="981" font-family="Liberation Sans" font-size="12.03" font-weight="normal" fill="#000" text-anchor="start" >FFT 65536 pts</text>
<rect x="519" y="968" width="73" height="1" fill="#808080" />
<rect x="519" y="968" width="1" height="18" fill="#808080" />
<rect x="519" y="985" width="73" height="1" fill="#FFFFFF" />
<rect x="591" y="968" width="1" height="18" fill="#FFFFFF" />
<text x="523.5" y="981" font-family="Liberation Sans" font-size="12.35" font-weight="normal" fill="#000" text-anchor="start" >Hanning</text>
<rect x="0" y="990" width="1280" height="1" fill="#F4F2EE" />
<rect x="0" y="991" width="1280" height="1" fill="#FFFFFF" />
<rect x="2" y="994" width="63" height="27" fill="#D4D0C8" />
<rect x="2" y="994" width="63" height="1" fill="#FFFFFF" />
<rect x="2" y="994" width="1" height="27" fill="#FFFFFF" />
<rect x="2" y="1020" width="63" height="1" fill="#000" />
<rect x="64" y="994" width="1" height="27" fill="#000" />
<rect x="3" y="995" width="61" height="1" fill="#D4D0C8" />
<rect x="3" y="995" width="1" height="25" fill="#D4D0C8" />
<rect x="3" y="1019" width="61" height="1" fill="#808080" />
<rect x="63" y="995" width="1" height="25" fill="#808080" />
<defs><linearGradient id="wr" x1="0" y1="0" x2="1" y2="1"><stop offset="0" stop-color="#F8A040"/><stop offset="1" stop-color="#E03010"/></linearGradient><linearGradient id="wg" x1="0" y1="0" x2="1" y2="1"><stop offset="0" stop-color="#B8E070"/><stop offset="1" stop-color="#50A020"/></linearGradient><linearGradient id="wb" x1="0" y1="0" x2="1" y2="1"><stop offset="0" stop-color="#A0D8F8"/><stop offset="1" stop-color="#2070D0"/></linearGradient><linearGradient id="wy" x1="0" y1="0" x2="1" y2="1"><stop offset="0" stop-color="#FFE860"/><stop offset="1" stop-color="#F0A010"/></linearGradient><linearGradient id="calc" x1="0" y1="0" x2="0" y2="1"><stop offset="0" stop-color="#C8E4F8"/><stop offset="1" stop-color="#78B4E0"/></linearGradient><radialGradient id="globe" cx="0.4" cy="0.35" r="0.7"><stop offset="0" stop-color="#C8E0FF"/><stop offset="0.5" stop-color="#4A86D8"/><stop offset="1" stop-color="#1C3C90"/></radialGradient><linearGradient id="cool" x1="0" y1="0" x2="1" y2="1"><stop offset="0" stop-color="#6070E0"/><stop offset="1" stop-color="#2028A0"/></linearGradient><linearGradient id="desk" x1="0" y1="0" x2="1" y2="1"><stop offset="0" stop-color="#3070D0"/><stop offset="1" stop-color="#70B0F0"/></linearGradient></defs>
<g shape-rendering="auto"><path d="M8 998.5 Q11 996.5 15.5 998.5 L13.8 1005 Q9.5 1003 6 1005 Z" fill="url(#wr)"/><path d="M16.5 998.8 Q20 1000.5 24 998.5 L22.3 1005.2 Q18.5 1007 14.8 1005.3 Z" fill="url(#wg)"/><path d="M5.8 1006 Q9.3 1004 13.5 1006 L11.8 1012.8 Q8 1010.8 4.2 1013 Z" fill="url(#wb)"/><path d="M14.5 1006.3 Q18.3 1008 22 1006.2 L20.4 1013 Q16.5 1014.8 12.8 1013 Z" fill="url(#wy)"/></g>
<text x="25.0" y="1012" font-family="Liberation Sans" font-size="15.35" font-weight="bold" fill="#000" text-anchor="start" >Start</text>
<g shape-rendering="auto"><path d="M83.5 1001.5 L90 1001.5 L92 1003 L102.5 1003 L102.5 1016.5 L83.5 1016.5 Z" fill="#F4DC80" stroke="#C8A848"/><rect x="85" y="1003.5" width="2" height="2" fill="#40C040"/><rect x="92" y="1004" width="2" height="2" fill="#E04040"/><rect x="97" y="1004" width="2" height="2" fill="#40A0E0"/><path d="M84 1006 L102 1006 L102 1016 L84 1016 Z" fill="#F8E8A0"/><path d="M86 1010 L100 1010 L100 1018 L97 1018 L97 1014 L89 1014 L89 1018 L86 1018 Z" fill="#80C8F0" stroke="#5098D0" stroke-width="0.8"/></g>
<rect x="113" y="995" width="110" height="26" fill="#D4D0C8" />
<rect x="113" y="995" width="110" height="1" fill="#FFFFFF" />
<rect x="113" y="995" width="1" height="26" fill="#FFFFFF" />
<rect x="113" y="1020" width="110" height="1" fill="#000" />
<rect x="222" y="995" width="1" height="26" fill="#000" />
<rect x="114" y="996" width="108" height="1" fill="#D4D0C8" />
<rect x="114" y="996" width="1" height="24" fill="#D4D0C8" />
<rect x="114" y="1019" width="108" height="1" fill="#808080" />
<rect x="221" y="996" width="1" height="24" fill="#808080" />
<text x="141.0" y="1013" font-family="Liberation Sans" font-size="13.22" font-weight="normal" fill="#000" text-anchor="start" >Calculator</text>
<g shape-rendering="auto"><rect x="119.5" y="998.5" width="14.5" height="19" rx="1.5" fill="url(#calc)" stroke="#6AA0D0"/><rect x="121.5" y="1000.5" width="10.5" height="4.5" fill="#F0F8FF" stroke="#90B8D8" stroke-width="0.6"/><rect x="121.5" y="1000.5" width="10.5" height="1.2" fill="#E8A040"/><rect x="121.5" y="1006.8" width="1.8" height="1.8" fill="#F4FAFF"/><rect x="121.5" y="1009.4" width="1.8" height="1.8" fill="#F4FAFF"/><rect x="121.5" y="1012.0" width="1.8" height="1.8" fill="#F4FAFF"/><rect x="121.5" y="1014.5999999999999" width="1.8" height="1.8" fill="#F4FAFF"/><rect x="124.2" y="1006.8" width="1.8" height="1.8" fill="#F4FAFF"/><rect x="124.2" y="1009.4" width="1.8" height="1.8" fill="#F4FAFF"/><rect x="124.2" y="1012.0" width="1.8" height="1.8" fill="#F4FAFF"/><rect x="124.2" y="1014.5999999999999" width="1.8" height="1.8" fill="#F4FAFF"/><rect x="126.9" y="1006.8" width="1.8" height="1.8" fill="#F4FAFF"/><rect x="126.9" y="1009.4" width="1.8" height="1.8" fill="#F4FAFF"/><rect x="126.9" y="1012.0" width="1.8" height="1.8" fill="#F4FAFF"/><rect x="126.9" y="1014.5999999999999" width="1.8" height="1.8" fill="#F4FAFF"/><rect x="129.6" y="1006.8" width="1.8" height="1.8" fill="#F4FAFF"/><rect x="129.6" y="1009.4" width="1.8" height="1.8" fill="#F4FAFF"/><rect x="129.6" y="1012.0" width="1.8" height="1.8" fill="#F4FAFF"/><rect x="129.6" y="1014.5999999999999" width="1.8" height="1.8" fill="#F4FAFF"/></g>
<rect x="232" y="1000" width="19" height="15" fill="#000" />
<rect x="232" y="1000" width="19" height="2" fill="#606060" />
<rect x="233" y="1003" width="6" height="1" fill="#C0C0C0" />
<rect x="239" y="1006" width="4" height="1" fill="#808080" />
<circle cx="280" cy="1008.5" r="9.5" fill="url(#globe)" shape-rendering="auto"/>
<rect x="300" y="995" width="109" height="26" fill="#D4D0C8" />
<rect x="300" y="995" width="109" height="1" fill="#FFFFFF" />
<rect x="300" y="995" width="1" height="26" fill="#FFFFFF" />
<rect x="300" y="1020" width="109" height="1" fill="#000" />
<rect x="408" y="995" width="1" height="26" fill="#000" />
<rect x="301" y="996" width="107" height="1" fill="#D4D0C8" />
<rect x="301" y="996" width="1" height="24" fill="#D4D0C8" />
<rect x="301" y="1019" width="107" height="1" fill="#808080" />
<rect x="407" y="996" width="1" height="24" fill="#808080" />
<text x="329.0" y="1013" font-family="Liberation Sans" font-size="13.1" font-weight="normal" fill="#000" text-anchor="start" >The Bat!</text>
<g shape-rendering="auto"><rect x="304" y="998" width="20" height="20" fill="#F8F8F8" stroke="#2050C0" stroke-width="1" stroke-dasharray="1 1"/><ellipse cx="314" cy="1008" rx="8.5" ry="8" fill="#F0E030"/><path d="M306 1006 Q309 1004 311 1007 L312 1003 L313.5 1005 L314.5 1005 L316 1003 L317 1007 Q319 1004 322 1006 Q320 1011 317 1010 Q315 1014 314 1014 Q313 1014 311 1010 Q308 1011 306 1006 Z" fill="#000"/></g>
<rect x="411" y="995" width="109" height="26" fill="#D4D0C8" />
<rect x="411" y="995" width="109" height="1" fill="#FFFFFF" />
<rect x="411" y="995" width="1" height="26" fill="#FFFFFF" />
<rect x="411" y="1020" width="109" height="1" fill="#000" />
<rect x="519" y="995" width="1" height="26" fill="#000" />
<rect x="412" y="996" width="107" height="1" fill="#D4D0C8" />
<rect x="412" y="996" width="1" height="24" fill="#D4D0C8" />
<rect x="412" y="1019" width="107" height="1" fill="#808080" />
<rect x="518" y="996" width="1" height="24" fill="#808080" />
<text x="439.5" y="1013" font-family="Liberation Sans" font-size="14.62" font-weight="normal" fill="#000" text-anchor="start" >{C:\Temp...</text>
<g shape-rendering="crispEdges"><rect x="415" y="998" width="20" height="20" fill="#00C8D8"/><rect x="415" y="1017" width="20" height="1" fill="#004080"/><rect x="416" y="999" width="8" height="17" fill="#0030D0"/><rect x="426" y="999" width="8" height="17" fill="#0028B0"/><rect x="418" y="1000" width="4" height="1" fill="#C0B040"/><rect x="428" y="1000" width="4" height="1" fill="#C0B040"/><rect x="418" y="1003" width="4" height="1" fill="#40E0F0"/><rect x="428" y="1003" width="4" height="1" fill="#40E0F0"/><rect x="418" y="1005" width="4" height="1" fill="#40E0F0"/><rect x="428" y="1005" width="4" height="1" fill="#40E0F0"/><rect x="418" y="1008" width="4" height="1" fill="#40E0F0"/></g>
<rect x="522" y="995" width="109" height="26" fill="#D4D0C8" />
<rect x="522" y="995" width="109" height="1" fill="#FFFFFF" />
<rect x="522" y="995" width="1" height="26" fill="#FFFFFF" />
<rect x="522" y="1020" width="109" height="1" fill="#000" />
<rect x="630" y="995" width="1" height="26" fill="#000" />
<rect x="523" y="996" width="107" height="1" fill="#D4D0C8" />
<rect x="523" y="996" width="1" height="24" fill="#D4D0C8" />
<rect x="523" y="1019" width="107" height="1" fill="#808080" />
<rect x="629" y="996" width="1" height="24" fill="#808080" />
<text x="550.0" y="1013" font-family="Liberation Sans" font-size="14.39" font-weight="normal" fill="#000" text-anchor="start" >[03.03.20...</text>
<g shape-rendering="auto"><path d="M528.5 998.5 L540 998.5 L544.5 1003 L544.5 1017.5 L528.5 1017.5 Z" fill="#FFFFFF" stroke="#000"/><path d="M540 998.5 L540 1003 L544.5 1003" fill="#E0E0E0" stroke="#000" stroke-width="0.8"/><ellipse cx="533" cy="1007" rx="4" ry="3.5" fill="#C82070"/><circle cx="535" cy="1005" r="1.3" fill="#F0D020"/><path d="M532 1010 Q536 1013 539 1009" fill="none" stroke="#000" stroke-width="1.2"/></g>
<rect x="633" y="995" width="109" height="26" fill="url(#dither2)" />
<rect x="633" y="995" width="109" height="1" fill="#000" />
<rect x="633" y="995" width="1" height="26" fill="#000" />
<rect x="633" y="1020" width="109" height="1" fill="#FFFFFF" />
<rect x="741" y="995" width="1" height="26" fill="#FFFFFF" />
<rect x="634" y="996" width="107" height="1" fill="#808080" />
<rect x="634" y="996" width="1" height="24" fill="#808080" />
<rect x="634" y="1019" width="107" height="1" fill="#D4D0C8" />
<rect x="740" y="996" width="1" height="24" fill="#D4D0C8" />
<text x="661.0" y="1013" font-family="Liberation Sans" font-size="14.27" font-weight="bold" fill="#000" text-anchor="start" >SpectraL...</text>
<rect x="638" y="998" width="19" height="19" fill="#FFFFFF" />
<rect x="639" y="999" width="18" height="18" fill="#808080" />
<rect x="639" y="999" width="17" height="17" fill="#FFFFFF" />
<rect x="639" y="999" width="16" height="16" fill="#000" />
<rect x="641" y="999" width="1" height="16" fill="#006A00" />
<rect x="639" y="1001" width="16" height="1" fill="#006A00" />
<rect x="645" y="999" width="1" height="16" fill="#00A000" />
<rect x="639" y="1005" width="16" height="1" fill="#00A000" />
<rect x="649" y="999" width="1" height="16" fill="#006A00" />
<rect x="639" y="1009" width="16" height="1" fill="#006A00" />
<rect x="652" y="999" width="1" height="16" fill="#006A00" />
<rect x="639" y="1012" width="16" height="1" fill="#006A00" />
<polyline points="639,1004.5 641,1004.5 642.5,1005.5 643.5,1003.5 644,1006.5 646,1007.5 648,1008 650.5,1004.5 651.5,1007.5 653,1010 655,1013.5" fill="none" stroke="#FFFF00" stroke-width="1.8" stroke-linejoin="round" shape-rendering="auto"/>
<rect x="744" y="995" width="108" height="26" fill="#D4D0C8" />
<rect x="744" y="995" width="108" height="1" fill="#FFFFFF" />
<rect x="744" y="995" width="1" height="26" fill="#FFFFFF" />
<rect x="744" y="1020" width="108" height="1" fill="#000" />
<rect x="851" y="995" width="1" height="26" fill="#000" />
<rect x="745" y="996" width="106" height="1" fill="#D4D0C8" />
<rect x="745" y="996" width="1" height="24" fill="#D4D0C8" />
<rect x="745" y="1019" width="106" height="1" fill="#808080" />
<rect x="850" y="996" width="1" height="24" fill="#808080" />
<text x="772.0" y="1013" font-family="Liberation Sans" font-size="13.35" font-weight="normal" fill="#000" text-anchor="start" >Cool Edit ...</text>
<g shape-rendering="auto"><rect x="748" y="998" width="20" height="20" fill="url(#cool)"/><path d="M749 1005 Q757 1002 767 999 L767 1003 Q760 1006 760 1008 Q760 1010 767 1013 L767 1017 Q757 1014 749 1011 Z" fill="#D8DCE8"/><path d="M749 1007 L760 1007 L760 1009 L749 1009 Z" fill="#8890B0"/></g>
<rect x="854" y="995" width="108" height="26" fill="#D4D0C8" />
<rect x="854" y="995" width="108" height="1" fill="#FFFFFF" />
<rect x="854" y="995" width="1" height="26" fill="#FFFFFF" />
<rect x="854" y="1020" width="108" height="1" fill="#000" />
<rect x="961" y="995" width="1" height="26" fill="#000" />
<rect x="855" y="996" width="106" height="1" fill="#D4D0C8" />
<rect x="855" y="996" width="1" height="24" fill="#D4D0C8" />
<rect x="855" y="1019" width="106" height="1" fill="#808080" />
<rect x="960" y="996" width="1" height="24" fill="#808080" />
<text x="882.0" y="1013" font-family="Liberation Sans" font-size="13.49" font-weight="normal" fill="#000" text-anchor="start" >Sound</text>
<g shape-rendering="auto"><path d="M858 1004 L863 1004 L870 998.5 Q876 1003 876 1008 Q876 1013 870 1017.5 L863 1012 L858 1012 Z" fill="#D8DCE0" stroke="#A0A4A8"/><ellipse cx="870.5" cy="1008" rx="3" ry="7.5" fill="#B0B4B8"/><ellipse cx="870.5" cy="1008" rx="1.3" ry="3" fill="#E8E8E8"/></g>
<rect x="964" y="995" width="108" height="26" fill="#D4D0C8" />
<rect x="964" y="995" width="108" height="1" fill="#FFFFFF" />
<rect x="964" y="995" width="1" height="26" fill="#FFFFFF" />
<rect x="964" y="1020" width="108" height="1" fill="#000" />
<rect x="1071" y="995" width="1" height="26" fill="#000" />
<rect x="965" y="996" width="106" height="1" fill="#D4D0C8" />
<rect x="965" y="996" width="1" height="24" fill="#D4D0C8" />
<rect x="965" y="1019" width="106" height="1" fill="#808080" />
<rect x="1070" y="996" width="1" height="24" fill="#808080" />
<text x="992.0" y="1013" font-family="Liberation Sans" font-size="13.49" font-weight="normal" fill="#000" text-anchor="start" >Adobe Ph...</text>
<g shape-rendering="auto"><rect x="968" y="1000" width="17" height="18" fill="#3868C8"/><circle cx="977" cy="1007" r="8" fill="none" stroke="#2050A0" stroke-width="2"/><path d="M975 1002 L983 1002 L983 1015 L975 1015 Z" fill="#E8A040"/><circle cx="978" cy="1008" r="2.5" fill="#000"/><rect x="983" y="1004" width="5" height="8" rx="2" fill="#203070"/></g>
<text x="1085.0" y="1013" font-family="Liberation Sans" font-size="12.59" font-weight="normal" fill="#000" text-anchor="start" >EN</text>
<rect x="1108" y="995" width="1" height="26" fill="#808080" />
<rect x="1109" y="995" width="1" height="26" fill="#FFFFFF" />
<rect x="1114" y="995" width="163" height="1" fill="#808080" />
<rect x="1114" y="995" width="1" height="26" fill="#808080" />
<rect x="1114" y="1020" width="163" height="1" fill="#FFFFFF" />
<rect x="1276" y="995" width="1" height="26" fill="#FFFFFF" />
<rect x="1125" y="1003" width="1" height="1" fill="#000" />
<rect x="1124" y="1004" width="1" height="1" fill="#000" />
<rect x="1126" y="1004" width="1" height="1" fill="#000" />
<rect x="1123" y="1005" width="1" height="1" fill="#000" />
<rect x="1127" y="1005" width="1" height="1" fill="#000" />
<rect x="1125" y="1006" width="1" height="1" fill="#000" />
<rect x="1124" y="1007" width="1" height="1" fill="#000" />
<rect x="1126" y="1007" width="1" height="1" fill="#000" />
<rect x="1123" y="1008" width="1" height="1" fill="#000" />
<rect x="1127" y="1008" width="1" height="1" fill="#000" />
<g shape-rendering="auto"><path d="M1142.5 1003.5 L1146 1003.5 L1151.5 998.5 L1151.5 1017.5 L1146 1012.5 L1142.5 1012.5 Z" fill="#F0F0F0" stroke="#606060"/><path d="M1154 1005 Q1156 1008 1154 1011 M1156.5 1002.5 Q1160 1008 1156.5 1013.5 M1159 1000.5 Q1163 1008 1159 1015.5" fill="none" stroke="#808080" stroke-width="0.9"/></g>
<g shape-rendering="auto"><rect x="1175.5" y="1002.5" width="16" height="12" fill="#A8A8A8" stroke="#606060"/><rect x="1177.5" y="1004.5" width="12" height="8" fill="#D0D0D0"/><rect x="1178" y="1015" width="10" height="3" fill="#E0E0E0" stroke="#606060" stroke-width="0.8"/><rect x="1172.5" y="998.5" width="5" height="8" fill="#F8F8F8" stroke="#505050"/><rect x="1174" y="1006" width="2" height="12" fill="#707070"/></g>
<text x="1210.0" y="1013" font-family="Liberation Sans" font-size="14.17" font-weight="normal" fill="#000" text-anchor="start" >18:10</text>
<g shape-rendering="auto"><rect x="1255.5" y="1000.5" width="18" height="14" fill="url(#desk)" stroke="#C0C8D0"/><rect x="1257" y="1012" width="15" height="1.5" fill="#204080"/></g>
<rect x="67" y="86" width="72" height="15" fill="#000" />
<rect x="68" y="87" width="70" height="13" fill="#FFFFFF" />
<text x="71" y="98" font-family="Liberation Sans" font-size="11.3" font-weight="normal" fill="#000" text-anchor="start" textLength="64" lengthAdjust="spacingAndGlyphs">Stop analyzer</text>
</g>
</svg></body></html>
